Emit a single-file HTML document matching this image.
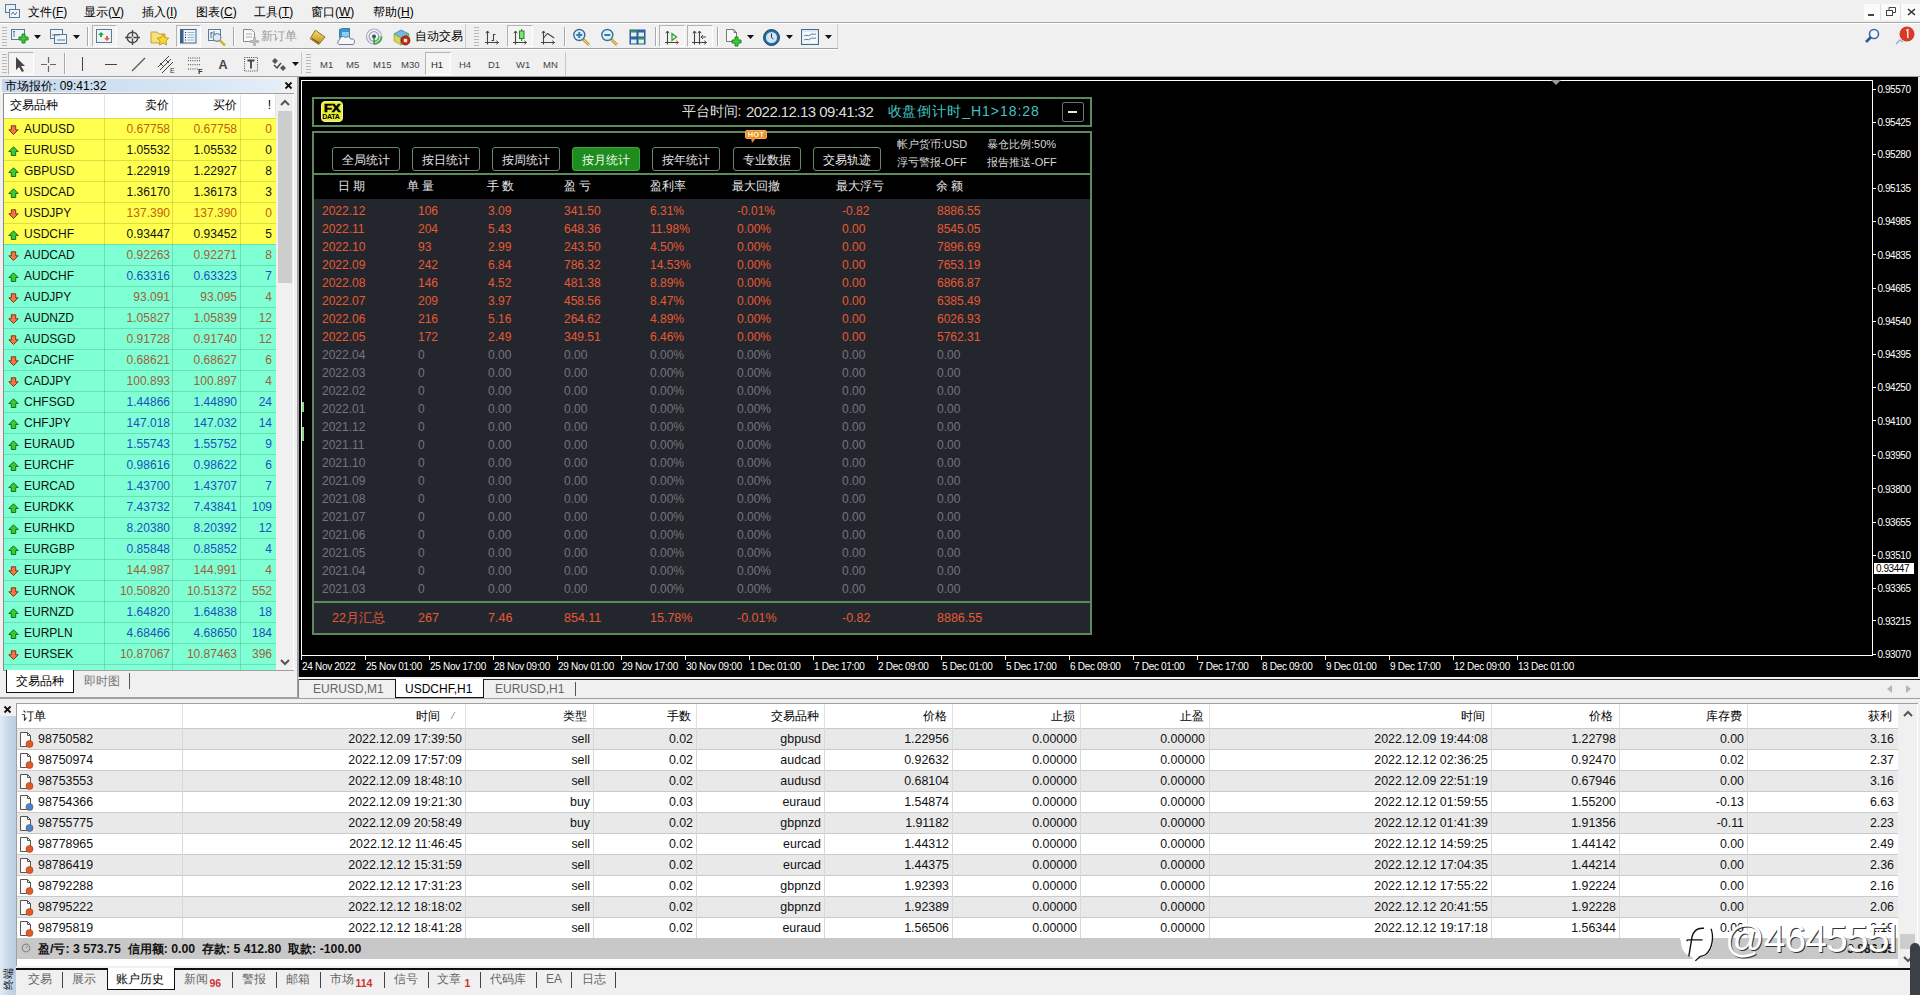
<!DOCTYPE html><html><head><meta charset="utf-8"><style>
*{margin:0;padding:0;box-sizing:border-box}
html,body{width:1920px;height:995px;overflow:hidden}
body{position:relative;background:#f0f0f0;font-family:"Liberation Sans",sans-serif}
.t{position:absolute;white-space:pre}
.b{position:absolute}
</style></head><body>
<div class="b" style="left:0px;top:0px;width:1920px;height:22px;background:#f0f0f0"></div>
<svg class="b" style="left:4px;top:3px" width="17" height="16" viewBox="0 0 17 16"><rect x="1.5" y="1.5" width="10" height="8" fill="#e8f0f8" stroke="#5a7a98"/><rect x="5.5" y="6.5" width="10" height="8" fill="#f0f6fb" stroke="#5a7a98"/><path d="M7 12l2-3 2 3 2-3" stroke="#5a7a98" fill="none"/></svg>
<div class="t" style="left:28px;top:2.5px;height:18px;line-height:18px;font-size:12px;color:#000;">文件(<u>F</u>)</div>
<div class="t" style="left:84px;top:2.5px;height:18px;line-height:18px;font-size:12px;color:#000;">显示(<u>V</u>)</div>
<div class="t" style="left:142px;top:2.5px;height:18px;line-height:18px;font-size:12px;color:#000;">插入(<u>I</u>)</div>
<div class="t" style="left:196px;top:2.5px;height:18px;line-height:18px;font-size:12px;color:#000;">图表(<u>C</u>)</div>
<div class="t" style="left:254px;top:2.5px;height:18px;line-height:18px;font-size:12px;color:#000;">工具(<u>T</u>)</div>
<div class="t" style="left:311px;top:2.5px;height:18px;line-height:18px;font-size:12px;color:#000;">窗口(<u>W</u>)</div>
<div class="t" style="left:373px;top:2.5px;height:18px;line-height:18px;font-size:12px;color:#000;">帮助(<u>H</u>)</div>
<div class="b" style="left:0px;top:22px;width:1920px;height:1px;background:#a8a8a8"></div>
<div class="b" style="left:0px;top:23px;width:1920px;height:1px;background:#ffffff"></div>
<div class="b" style="left:1864px;top:4px;width:56px;height:16px;background:#fbfbfb"></div>
<div class="b" style="left:1880px;top:4px;width:1px;height:16px;background:#e0e0e0"></div>
<div class="b" style="left:1900px;top:4px;width:1px;height:16px;background:#e0e0e0"></div>
<div class="b" style="left:1868px;top:14px;width:6px;height:2px;background:#444"></div>
<svg class="b" style="left:1886px;top:7px" width="10" height="10" viewBox="0 0 10 10"><rect x="0.5" y="3.5" width="6" height="5" fill="none" stroke="#444"/><path d="M3 3.5V0.5h6.5v5H7" fill="none" stroke="#444"/></svg>
<svg class="b" style="left:1907px;top:8px" width="9" height="8" viewBox="0 0 9 8"><path d="M1 1l7 6M8 1L1 7" stroke="#333" stroke-width="1.6"/></svg>
<div class="b" style="left:0px;top:48px;width:838px;height:1px;background:#a0a0a0"></div>
<div class="b" style="left:0px;top:49px;width:838px;height:1px;background:#ffffff"></div>
<div class="b" style="left:0px;top:76px;width:1920px;height:1px;background:#a0a0a0"></div>
<div class="b" style="left:2px;top:27px;width:5px;height:1px;background:#b8b8b8"></div><div class="b" style="left:2px;top:30px;width:5px;height:1px;background:#b8b8b8"></div><div class="b" style="left:2px;top:33px;width:5px;height:1px;background:#b8b8b8"></div><div class="b" style="left:2px;top:36px;width:5px;height:1px;background:#b8b8b8"></div><div class="b" style="left:2px;top:39px;width:5px;height:1px;background:#b8b8b8"></div><div class="b" style="left:2px;top:42px;width:5px;height:1px;background:#b8b8b8"></div><div class="b" style="left:2px;top:45px;width:5px;height:1px;background:#b8b8b8"></div>
<svg class="b" style="left:10px;top:28px" width="20" height="18" viewBox="0 0 20 18"><rect x="1.5" y="1.5" width="13" height="10" fill="#eef4fa" stroke="#5b7b94"/><path d="M3 4l1-1 1 1M4 3v6" stroke="#5b7b94" fill="none"/><path d="M12 6h3v3h3v3h-3v3h-3v-3H9V9h3z" fill="#3cc83c" stroke="#1a8a1a"/></svg>
<svg class="b" style="left:34px;top:35px" width="7" height="4" viewBox="0 0 7 4"><path d="M0 0h7L3.5 4z" fill="#111"/></svg>
<svg class="b" style="left:49px;top:28px" width="20" height="18" viewBox="0 0 20 18"><rect x="1.5" y="1.5" width="12" height="9" fill="#eef4fa" stroke="#5b7b94"/><rect x="5.5" y="6.5" width="12" height="9" fill="#eef4fa" stroke="#5b7b94"/><path d="M3 7h8M8 12h8" stroke="#5b7b94"/></svg>
<svg class="b" style="left:73px;top:35px" width="7" height="4" viewBox="0 0 7 4"><path d="M0 0h7L3.5 4z" fill="#111"/></svg>
<div class="b" style="left:87px;top:27px;width:1px;height:19px;background:#a8a8a8"></div><div class="b" style="left:88px;top:27px;width:1px;height:19px;background:#fff"></div>
<div class="b" style="left:92px;top:25px;width:25px;height:22px;border:1px solid #b4b4b4;border-right-color:#fff;border-bottom-color:#fff;background:#f4f4f4"></div>
<svg class="b" style="left:96px;top:29px" width="17" height="15" viewBox="0 0 17 15"><rect x="0.5" y="0.5" width="15" height="13" fill="#eef4fa" stroke="#5b7b94"/><path d="M5 3l3 3H6v2H4V6H2z" fill="#2aa82a"/><path d="M11 12l3-3h-2V7h-2v2H8z" fill="#e8603c"/></svg>
<svg class="b" style="left:124px;top:29px" width="18" height="17" viewBox="0 0 18 17"><circle cx="8.5" cy="8.5" r="5.3" fill="none" stroke="#4a4a4a" stroke-width="1.4"/><path d="M8.5 1v15M1 8.5h15" stroke="#4a4a4a" stroke-width="1.4"/><circle cx="8.5" cy="8.5" r="1" fill="#f0f0f0"/></svg>
<svg class="b" style="left:150px;top:28px" width="20" height="18" viewBox="0 0 20 18"><path d="M1 4h6l2 2h6v9H1z" fill="#f6e27a" stroke="#c8a030"/><path d="M13 6l1.8 3.6 4 .6-2.9 2.8.7 4-3.6-1.9-3.6 1.9.7-4-2.9-2.8 4-.6z" fill="#f8d838" stroke="#c89820"/></svg>
<div class="b" style="left:176px;top:25px;width:25px;height:22px;border:1px solid #b4b4b4;border-right-color:#fff;border-bottom-color:#fff;background:#f4f4f4"></div>
<svg class="b" style="left:180px;top:29px" width="17" height="15" viewBox="0 0 17 15"><rect x="0.5" y="0.5" width="15.5" height="13.5" fill="#eef6fc" stroke="#3e6688"/><rect x="1" y="1" width="2.5" height="13" fill="#3a6090"/><path d="M5 3.5h1M5 6h1M5 8.5h1M5 11h1" stroke="#223"/><path d="M7.5 3.5h7M7.5 6h7M7.5 8.5h7M7.5 11h7" stroke="#9ab4cc"/></svg>
<svg class="b" style="left:207px;top:28px" width="20" height="19" viewBox="0 0 20 19"><rect x="1.5" y="1.5" width="12" height="11" fill="#eef4fa" stroke="#5b7b94"/><path d="M4 4v6M4 5h2M7 3v5M7 7h2" stroke="#4a6a8a"/><circle cx="10" cy="9.5" r="4" fill="#d8e8f8" fill-opacity="0.8" stroke="#5b7b94"/><path d="M13 12.5l5 5" stroke="#d8b040" stroke-width="2.5"/></svg>
<div class="b" style="left:233px;top:27px;width:1px;height:19px;background:#a8a8a8"></div><div class="b" style="left:234px;top:27px;width:1px;height:19px;background:#fff"></div>
<svg class="b" style="left:242px;top:28px" width="18" height="18" viewBox="0 0 18 18"><path d="M1.5 1.5h8l3 3v9h-11z" fill="#f8f8f8" stroke="#8a8a8a"/><path d="M4 6h6M4 9h6" stroke="#aaa"/><path d="M11 9h3v3h3v3h-3v3h-3v-3H8v-3h3z" fill="#b8b8b8"/></svg>
<div class="t" style="left:261px;top:27.0px;height:18px;line-height:18px;font-size:12px;color:#9a9a9a;">新订单</div>
<svg class="b" style="left:308px;top:28px" width="20" height="19" viewBox="0 0 20 19"><defs><linearGradient id="gy" x1="0" y1="0" x2="0" y2="1"><stop offset="0" stop-color="#f8e070"/><stop offset="1" stop-color="#b88a20"/></linearGradient></defs><path d="M7.3 2.2L17 9l-6.2 7.5L2.2 10.8z" fill="url(#gy)" stroke="#8a6a18" stroke-width="0.9"/><path d="M4 10.5l7 4.5" stroke="#7a5a10" stroke-width="1.2"/></svg>
<svg class="b" style="left:337px;top:28px" width="18" height="18" viewBox="0 0 18 18"><path d="M2.5 1.5l3-1h7v9h-10z" fill="#3a98c8" stroke="#2a6a98" stroke-width="0.8"/><path d="M5 4h7v5H5z" fill="#8ad0f0"/><path d="M2 16.5a2.5 2.5 0 0 1 0.5-4.5 3.5 3.5 0 0 1 6-2.5 3 3 0 0 1 5 1.5 2.8 2.8 0 0 1 2.5 5.5z" fill="#f4f6fa" stroke="#5a6a8a" stroke-width="0.9"/></svg>
<svg class="b" style="left:365px;top:28px" width="18" height="18" viewBox="0 0 18 18"><circle cx="9" cy="8.5" r="7.5" fill="none" stroke="#a8acc8" stroke-width="1.2"/><circle cx="9" cy="8.5" r="4.8" fill="none" stroke="#98a0c0" stroke-width="1.2"/><path d="M16.5 8.5A7.5 7.5 0 0 1 9 16" fill="none" stroke="#50a850" stroke-width="2"/><path d="M13.8 8.5A4.8 4.8 0 0 1 9 13.3" fill="none" stroke="#60b860" stroke-width="1.6"/><circle cx="9" cy="8.5" r="2" fill="#2a5a5a"/><path d="M9 9v7" stroke="#3a8a4a" stroke-width="1.4"/></svg>
<svg class="b" style="left:392px;top:28px" width="20" height="19" viewBox="0 0 20 19"><path d="M2 6l7-4 8 4-8 4z" fill="#78b8e0" stroke="#3a78a8" stroke-width="0.8"/><path d="M2 6l7 4v7l-7-4z" fill="#d8d858" stroke="#8a9030" stroke-width="0.6"/><path d="M9 10l8-4v7l-8 4z" fill="#a8c848" stroke="#7a9030" stroke-width="0.6"/><circle cx="13.5" cy="12.5" r="4.5" fill="#c02818" stroke="#801810" stroke-width="0.8"/><rect x="11.8" y="10.8" width="3.4" height="3.4" fill="#f4e8e0"/></svg>
<div class="t" style="left:415px;top:27.0px;height:18px;line-height:18px;font-size:12px;color:#000;">自动交易</div>
<div class="b" style="left:474px;top:27px;width:5px;height:1px;background:#b8b8b8"></div><div class="b" style="left:474px;top:30px;width:5px;height:1px;background:#b8b8b8"></div><div class="b" style="left:474px;top:33px;width:5px;height:1px;background:#b8b8b8"></div><div class="b" style="left:474px;top:36px;width:5px;height:1px;background:#b8b8b8"></div><div class="b" style="left:474px;top:39px;width:5px;height:1px;background:#b8b8b8"></div><div class="b" style="left:474px;top:42px;width:5px;height:1px;background:#b8b8b8"></div><div class="b" style="left:474px;top:45px;width:5px;height:1px;background:#b8b8b8"></div>
<svg class="b" style="left:482px;top:28px" width="18" height="18" viewBox="0 0 18 18"><path d="M5.5 3v13.5M3 14.5h13.5" stroke="#444" stroke-width="1.1"/><path d="M3.8 5.2L5.5 3l1.7 2.2M14.3 12.8l2.2 1.7-2.2 1.7" fill="none" stroke="#444" stroke-width="1"/><path d="M11.5 6v7M11.5 6.5h2M9.5 12.5h2" stroke="#444" stroke-width="1.1"/></svg>
<div class="b" style="left:507px;top:25px;width:26px;height:22px;border:1px solid #b4b4b4;border-right-color:#fff;border-bottom-color:#fff;background:#f4f4f4"></div>
<svg class="b" style="left:511px;top:28px" width="18" height="18" viewBox="0 0 18 18"><path d="M4.5 3v13.5M2 14.5h13.5" stroke="#444" stroke-width="1.1"/><path d="M2.8 5.2L4.5 3l1.7 2.2M13.3 12.8l2.2 1.7-2.2 1.7" fill="none" stroke="#444" stroke-width="1"/><path d="M10.6 1v12" stroke="#226622"/><rect x="8.5" y="3" width="4.5" height="7.5" fill="#7ae07a" stroke="#228822"/></svg>
<svg class="b" style="left:540px;top:28px" width="18" height="18" viewBox="0 0 18 18"><path d="M3.5 3v13.5M1 14.5h13.5" stroke="#444" stroke-width="1.1"/><path d="M1.8 5.2L3.5 3l1.7 2.2M12.3 12.8l2.2 1.7-2.2 1.7" fill="none" stroke="#444" stroke-width="1"/><path d="M3.5 10l4-4.5 6.7 4.5" fill="none" stroke="#444" stroke-width="1.1"/></svg>
<div class="b" style="left:564px;top:27px;width:1px;height:19px;background:#a8a8a8"></div><div class="b" style="left:565px;top:27px;width:1px;height:19px;background:#fff"></div>
<svg class="b" style="left:572px;top:28px" width="20" height="19" viewBox="0 0 20 19"><path d="M11.5 11.5l5.5 5.5" stroke="#c8a030" stroke-width="3"/><path d="M11.5 11.5l5.5 5.5" stroke="#f0d890" stroke-width="1"/><circle cx="7.3" cy="7" r="5.5" fill="#dcf0fa" stroke="#3a6e94" stroke-width="1.4"/><path d="M4.3 7h6M7.3 4v6" stroke="#3a7aa8" stroke-width="2"/></svg>
<svg class="b" style="left:600px;top:28px" width="20" height="19" viewBox="0 0 20 19"><path d="M11.5 11.5l5.5 5.5" stroke="#c8a030" stroke-width="3"/><path d="M11.5 11.5l5.5 5.5" stroke="#f0d890" stroke-width="1"/><circle cx="7.3" cy="7" r="5.5" fill="#dcf0fa" stroke="#3a6e94" stroke-width="1.4"/><path d="M4.3 7h6" stroke="#3a7aa8" stroke-width="2"/></svg>
<svg class="b" style="left:629px;top:29px" width="17" height="16" viewBox="0 0 17 16"><rect x="0.5" y="0.5" width="16" height="15" fill="#2a5a98"/><rect x="1.5" y="1.5" width="6.5" height="2" fill="#3a9a48"/><rect x="9" y="1.5" width="6.5" height="2" fill="#2a68b0"/><rect x="1.5" y="8.5" width="6.5" height="2" fill="#2a68b0"/><rect x="9" y="8.5" width="6.5" height="2" fill="#3a9a48"/><rect x="2" y="3.5" width="5.5" height="4" fill="#e4f2e4"/><rect x="9.5" y="3.5" width="5.5" height="4" fill="#e4eef8"/><rect x="2" y="10.5" width="5.5" height="4" fill="#e4eef8"/><rect x="9.5" y="10.5" width="5.5" height="4" fill="#e4f2e4"/></svg>
<div class="b" style="left:655px;top:27px;width:1px;height:19px;background:#a8a8a8"></div><div class="b" style="left:656px;top:27px;width:1px;height:19px;background:#fff"></div>
<div class="b" style="left:659px;top:25px;width:26px;height:22px;border:1px solid #b4b4b4;border-right-color:#fff;border-bottom-color:#fff;background:#f4f4f4"></div>
<svg class="b" style="left:663px;top:28px" width="18" height="18" viewBox="0 0 18 18"><path d="M4.5 3v13.5M2 14.5h13.5" stroke="#444" stroke-width="1.1"/><path d="M2.8 5.2L4.5 3l1.7 2.2" fill="none" stroke="#444" stroke-width="1"/><path d="M13.3 12.8l2.2 1.7-2.2 1.7" fill="none" stroke="#c04040" stroke-width="1"/><path d="M9 5.5v7l4.5-3.5z" fill="none" stroke="#30a030" stroke-width="1.3"/></svg>
<div class="b" style="left:687px;top:25px;width:26px;height:22px;border:1px solid #b4b4b4;border-right-color:#fff;border-bottom-color:#fff;background:#f4f4f4"></div>
<svg class="b" style="left:691px;top:28px" width="18" height="18" viewBox="0 0 18 18"><path d="M3.5 3v13.5M8.5 3v13.5M1 14.5h14.5" stroke="#444" stroke-width="1.1"/><path d="M1.8 5.2L3.5 3l1.7 2.2M6.8 5.2L8.5 3l1.7 2.2M13.3 12.8l2.2 1.7-2.2 1.7" fill="none" stroke="#444" stroke-width="1"/><path d="M15 9h-5M12 7l-2 2 2 2" fill="none" stroke="#444"/></svg>
<div class="b" style="left:717px;top:27px;width:1px;height:19px;background:#a8a8a8"></div><div class="b" style="left:718px;top:27px;width:1px;height:19px;background:#fff"></div>
<svg class="b" style="left:725px;top:28px" width="19" height="19" viewBox="0 0 19 19"><path d="M1.5 1.5h7l3 3v9h-10z" fill="#f8f8f8" stroke="#777"/><path d="M9 1.5v3h3" fill="none" stroke="#777"/><path d="M10 9h3v3h3v3h-3v3h-3v-3H7v-3h3z" fill="#3cc83c" stroke="#1a8a1a"/></svg>
<svg class="b" style="left:747px;top:35px" width="7" height="4" viewBox="0 0 7 4"><path d="M0 0h7L3.5 4z" fill="#111"/></svg>
<svg class="b" style="left:762px;top:28px" width="19" height="19" viewBox="0 0 19 19"><circle cx="9.5" cy="9.5" r="8" fill="#2a6a98" stroke="#1a4a70"/><circle cx="9.5" cy="9.5" r="5.5" fill="#cfe6f6"/><path d="M9.5 5.5v4l2 1.5" fill="none" stroke="#333"/></svg>
<svg class="b" style="left:786px;top:35px" width="7" height="4" viewBox="0 0 7 4"><path d="M0 0h7L3.5 4z" fill="#111"/></svg>
<svg class="b" style="left:801px;top:29px" width="19" height="17" viewBox="0 0 19 17"><rect x="0.5" y="0.5" width="17" height="15" fill="#dce8f4" stroke="#4a6a8a"/><rect x="2" y="3" width="14" height="11" fill="#f4f8fc"/><path d="M3 7c2-2 4 1 6-1s4 0 6-1M3 11c2-2 4 1 6-1s4 0 6-1" fill="none" stroke="#5a7a9a"/></svg>
<svg class="b" style="left:825px;top:35px" width="7" height="4" viewBox="0 0 7 4"><path d="M0 0h7L3.5 4z" fill="#111"/></svg>
<div class="b" style="left:837px;top:24px;width:1px;height:24px;background:#d0d0d0"></div>
<div class="b" style="left:465px;top:24px;width:1px;height:24px;background:#d0d0d0"></div>
<svg class="b" style="left:1864px;top:28px" width="16" height="16" viewBox="0 0 16 16"><circle cx="10" cy="6" r="4.5" fill="#f4f8fc" stroke="#3a6aa8" stroke-width="1.6"/><path d="M7 9l-5 5" stroke="#2a5a98" stroke-width="2.6"/></svg>
<svg class="b" style="left:1892px;top:26px" width="26" height="22" viewBox="0 0 26 22"><path d="M4 18l4-4 3 2" fill="none" stroke="#9ab0c8" stroke-width="1.5"/><circle cx="15" cy="8" r="7.5" fill="#d83a2a"/><path d="M14 4.5l1.8-1V12" fill="none" stroke="#fff" stroke-width="1.3"/></svg>
<div class="b" style="left:2px;top:54px;width:5px;height:1px;background:#b8b8b8"></div><div class="b" style="left:2px;top:57px;width:5px;height:1px;background:#b8b8b8"></div><div class="b" style="left:2px;top:60px;width:5px;height:1px;background:#b8b8b8"></div><div class="b" style="left:2px;top:63px;width:5px;height:1px;background:#b8b8b8"></div><div class="b" style="left:2px;top:66px;width:5px;height:1px;background:#b8b8b8"></div><div class="b" style="left:2px;top:69px;width:5px;height:1px;background:#b8b8b8"></div><div class="b" style="left:2px;top:72px;width:5px;height:1px;background:#b8b8b8"></div>
<div class="b" style="left:8px;top:52px;width:26px;height:23px;border:1px solid #b4b4b4;border-right-color:#fff;border-bottom-color:#fff;background:#f4f4f4"></div>
<svg class="b" style="left:15px;top:56px" width="12" height="16" viewBox="0 0 12 16"><path d="M1 1v13l3-3 3 5 2-1-3-5h4z" fill="#444"/></svg>
<svg class="b" style="left:40px;top:56px" width="17" height="17" viewBox="0 0 17 17"><path d="M8.5 1v6M8.5 10v6M1 8.5h6M10 8.5h6" stroke="#666" stroke-width="1.2"/></svg>
<div class="b" style="left:64px;top:53px;width:1px;height:21px;background:#a8a8a8"></div><div class="b" style="left:65px;top:53px;width:1px;height:21px;background:#fff"></div>
<div class="b" style="left:82px;top:57px;width:1px;height:14px;background:#444"></div>
<div class="b" style="left:105px;top:64px;width:12px;height:1px;background:#444"></div>
<svg class="b" style="left:131px;top:57px" width="15" height="15" viewBox="0 0 15 15"><path d="M1 14L14 1" stroke="#555" stroke-width="1.2"/></svg>
<svg class="b" style="left:157px;top:55px" width="20" height="19" viewBox="0 0 20 19"><path d="M1 12L12 1M3 15L14 4M5 18l11-11" stroke="#444"/><path d="M3 8l4 4M8 4l4 4" stroke="#444"/><text x="13" y="18" font-size="7" font-family="Liberation Sans" fill="#333">E</text></svg>
<svg class="b" style="left:186px;top:55px" width="20" height="19" viewBox="0 0 20 19"><path d="M2 3h13M2 5.7h13M2 9.7h13M2 14h11" stroke="#444" stroke-dasharray="1 1.2"/><text x="12" y="18.5" font-size="7.5" font-weight="bold" font-family="Liberation Sans" fill="#333">F</text></svg>
<div class="t" style="left:218.5px;top:55.5px;height:18px;line-height:18px;font-size:12.5px;color:#444;font-weight:bold">A</div>
<svg class="b" style="left:244px;top:57px" width="14" height="15" viewBox="0 0 14 15"><rect x="0.5" y="0.5" width="13" height="13.5" fill="none" stroke="#444" stroke-dasharray="1 1.2"/><path d="M3.5 3.5h7M7 3.5v8" stroke="#444" stroke-width="1.8"/></svg>
<svg class="b" style="left:271px;top:57px" width="16" height="15" viewBox="0 0 16 15"><path d="M4 1l3 3-3 3-3-3z" fill="#555"/><path d="M3 8l3 3 4-5" stroke="#444" stroke-width="1.4" fill="none"/><path d="M12 8l3 3-3 3-3-3z" fill="#555"/></svg>
<svg class="b" style="left:292px;top:62px" width="7" height="4" viewBox="0 0 7 4"><path d="M0 0h7L3.5 4z" fill="#111"/></svg>
<div class="b" style="left:301px;top:52px;width:1px;height:22px;background:#c8c8c8"></div>
<div class="b" style="left:306px;top:54px;width:5px;height:1px;background:#b8b8b8"></div><div class="b" style="left:306px;top:57px;width:5px;height:1px;background:#b8b8b8"></div><div class="b" style="left:306px;top:60px;width:5px;height:1px;background:#b8b8b8"></div><div class="b" style="left:306px;top:63px;width:5px;height:1px;background:#b8b8b8"></div><div class="b" style="left:306px;top:66px;width:5px;height:1px;background:#b8b8b8"></div><div class="b" style="left:306px;top:69px;width:5px;height:1px;background:#b8b8b8"></div><div class="b" style="left:306px;top:72px;width:5px;height:1px;background:#b8b8b8"></div>
<div class="t" style="left:320px;top:57.5px;height:14px;line-height:14px;font-size:9.5px;color:#444;">M1</div>
<div class="t" style="left:346px;top:57.5px;height:14px;line-height:14px;font-size:9.5px;color:#444;">M5</div>
<div class="t" style="left:373px;top:57.5px;height:14px;line-height:14px;font-size:9.5px;color:#444;">M15</div>
<div class="t" style="left:401px;top:57.5px;height:14px;line-height:14px;font-size:9.5px;color:#444;">M30</div>
<div class="t" style="left:459px;top:57.5px;height:14px;line-height:14px;font-size:9.5px;color:#444;">H4</div>
<div class="t" style="left:488px;top:57.5px;height:14px;line-height:14px;font-size:9.5px;color:#444;">D1</div>
<div class="t" style="left:516px;top:57.5px;height:14px;line-height:14px;font-size:9.5px;color:#444;">W1</div>
<div class="t" style="left:543px;top:57.5px;height:14px;line-height:14px;font-size:9.5px;color:#444;">MN</div>
<div class="b" style="left:425px;top:52px;width:26px;height:23px;border:1px solid #b4b4b4;border-right-color:#fff;border-bottom-color:#fff;background:#f4f4f4"></div>
<div class="t" style="left:431px;top:57.5px;height:14px;line-height:14px;font-size:9.5px;color:#222;">H1</div>
<div class="b" style="left:565px;top:52px;width:1px;height:24px;background:#c8c8c8"></div>
<div class="b" style="left:0px;top:77px;width:298px;height:621px;background:#f0f0f0"></div>
<div class="b" style="left:297px;top:77px;width:1px;height:621px;background:#a0a0a0"></div>
<div class="b" style="left:2px;top:79px;width:279px;height:13px;background:linear-gradient(to right,#c4d8ec,#d8e6f4 70%,#e4eef8)"></div>
<div class="t" style="left:5px;top:76.5px;height:18px;line-height:18px;font-size:12px;color:#000;">市场报价: 09:41:32</div>
<svg class="b" style="left:284px;top:81px" width="9" height="9" viewBox="0 0 9 9"><path d="M1.5 1.5l6 6M7.5 1.5l-6 6" stroke="#111" stroke-width="1.8"/></svg>
<div class="b" style="left:3px;top:93px;width:291px;height:578px;background:#fff;border-top:1px solid #a0a0a0;border-left:1px solid #8a8a8a"></div>
<div class="t" style="left:10px;top:96.0px;height:18px;line-height:18px;font-size:12px;color:#000;">交易品种</div>
<div class="t" style="left:-231px;width:400px;text-align:right;top:96.0px;height:18px;line-height:18px;font-size:12px;color:#000;">卖价</div>
<div class="t" style="left:-163px;width:400px;text-align:right;top:96.0px;height:18px;line-height:18px;font-size:12px;color:#000;">买价</div>
<div class="t" style="left:-129px;width:400px;text-align:right;top:96.0px;height:18px;line-height:18px;font-size:12px;color:#000;">!</div>
<div class="b" style="left:104px;top:95px;width:1px;height:22px;background:#e4e4e4"></div>
<div class="b" style="left:172px;top:95px;width:1px;height:22px;background:#e4e4e4"></div>
<div class="b" style="left:240px;top:95px;width:1px;height:22px;background:#e4e4e4"></div>
<div class="b" style="left:275px;top:95px;width:1px;height:22px;background:#e4e4e4"></div>
<div class="b" style="left:0;top:0;width:298px;height:671px;overflow:hidden"><div class="b" style="left:4px;top:118px;width:272px;height:21px;background:#ffff50"></div><div class="b" style="left:4px;top:118px;width:272px;height:1px;background:rgba(0,0,0,0.13)"></div><div class="b" style="left:104px;top:118px;width:1px;height:21px;background:rgba(0,0,0,0.13)"></div><div class="b" style="left:172px;top:118px;width:1px;height:21px;background:rgba(0,0,0,0.13)"></div><div class="b" style="left:240px;top:118px;width:1px;height:21px;background:rgba(0,0,0,0.13)"></div><svg class="b" style="left:8px;top:125px" width="11" height="11" viewBox="0 0 11 11"><path d="M5.5 9.5L0.8 4.8H3.3V0.8H7.7V4.8H10.2Z" fill="#f07848" stroke="#8a3010" stroke-width="1"/></svg><div class="t" style="left:24px;top:120.0px;height:18px;line-height:18px;font-size:12px;color:#111;">AUDUSD</div><div class="t" style="left:-230px;width:400px;text-align:right;top:120.0px;height:18px;line-height:18px;font-size:12px;color:#c0620a;">0.67758</div><div class="t" style="left:-163px;width:400px;text-align:right;top:120.0px;height:18px;line-height:18px;font-size:12px;color:#c0620a;">0.67758</div><div class="t" style="left:-128px;width:400px;text-align:right;top:120.0px;height:18px;line-height:18px;font-size:12px;color:#c0620a;">0</div><div class="b" style="left:4px;top:139px;width:272px;height:21px;background:#ffff50"></div><div class="b" style="left:4px;top:139px;width:272px;height:1px;background:rgba(0,0,0,0.13)"></div><div class="b" style="left:104px;top:139px;width:1px;height:21px;background:rgba(0,0,0,0.13)"></div><div class="b" style="left:172px;top:139px;width:1px;height:21px;background:rgba(0,0,0,0.13)"></div><div class="b" style="left:240px;top:139px;width:1px;height:21px;background:rgba(0,0,0,0.13)"></div><svg class="b" style="left:8px;top:146px" width="11" height="11" viewBox="0 0 11 11"><path d="M5.5 0.8L0.8 5.5H3.3V9.5H7.7V5.5H10.2Z" fill="#3cc83c" stroke="#157015" stroke-width="1"/></svg><div class="t" style="left:24px;top:141.0px;height:18px;line-height:18px;font-size:12px;color:#111;">EURUSD</div><div class="t" style="left:-230px;width:400px;text-align:right;top:141.0px;height:18px;line-height:18px;font-size:12px;color:#111;">1.05532</div><div class="t" style="left:-163px;width:400px;text-align:right;top:141.0px;height:18px;line-height:18px;font-size:12px;color:#111;">1.05532</div><div class="t" style="left:-128px;width:400px;text-align:right;top:141.0px;height:18px;line-height:18px;font-size:12px;color:#111;">0</div><div class="b" style="left:4px;top:160px;width:272px;height:21px;background:#ffff50"></div><div class="b" style="left:4px;top:160px;width:272px;height:1px;background:rgba(0,0,0,0.13)"></div><div class="b" style="left:104px;top:160px;width:1px;height:21px;background:rgba(0,0,0,0.13)"></div><div class="b" style="left:172px;top:160px;width:1px;height:21px;background:rgba(0,0,0,0.13)"></div><div class="b" style="left:240px;top:160px;width:1px;height:21px;background:rgba(0,0,0,0.13)"></div><svg class="b" style="left:8px;top:167px" width="11" height="11" viewBox="0 0 11 11"><path d="M5.5 0.8L0.8 5.5H3.3V9.5H7.7V5.5H10.2Z" fill="#3cc83c" stroke="#157015" stroke-width="1"/></svg><div class="t" style="left:24px;top:162.0px;height:18px;line-height:18px;font-size:12px;color:#111;">GBPUSD</div><div class="t" style="left:-230px;width:400px;text-align:right;top:162.0px;height:18px;line-height:18px;font-size:12px;color:#111;">1.22919</div><div class="t" style="left:-163px;width:400px;text-align:right;top:162.0px;height:18px;line-height:18px;font-size:12px;color:#111;">1.22927</div><div class="t" style="left:-128px;width:400px;text-align:right;top:162.0px;height:18px;line-height:18px;font-size:12px;color:#111;">8</div><div class="b" style="left:4px;top:181px;width:272px;height:21px;background:#ffff50"></div><div class="b" style="left:4px;top:181px;width:272px;height:1px;background:rgba(0,0,0,0.13)"></div><div class="b" style="left:104px;top:181px;width:1px;height:21px;background:rgba(0,0,0,0.13)"></div><div class="b" style="left:172px;top:181px;width:1px;height:21px;background:rgba(0,0,0,0.13)"></div><div class="b" style="left:240px;top:181px;width:1px;height:21px;background:rgba(0,0,0,0.13)"></div><svg class="b" style="left:8px;top:188px" width="11" height="11" viewBox="0 0 11 11"><path d="M5.5 0.8L0.8 5.5H3.3V9.5H7.7V5.5H10.2Z" fill="#3cc83c" stroke="#157015" stroke-width="1"/></svg><div class="t" style="left:24px;top:183.0px;height:18px;line-height:18px;font-size:12px;color:#111;">USDCAD</div><div class="t" style="left:-230px;width:400px;text-align:right;top:183.0px;height:18px;line-height:18px;font-size:12px;color:#111;">1.36170</div><div class="t" style="left:-163px;width:400px;text-align:right;top:183.0px;height:18px;line-height:18px;font-size:12px;color:#111;">1.36173</div><div class="t" style="left:-128px;width:400px;text-align:right;top:183.0px;height:18px;line-height:18px;font-size:12px;color:#111;">3</div><div class="b" style="left:4px;top:202px;width:272px;height:21px;background:#ffff50"></div><div class="b" style="left:4px;top:202px;width:272px;height:1px;background:rgba(0,0,0,0.13)"></div><div class="b" style="left:104px;top:202px;width:1px;height:21px;background:rgba(0,0,0,0.13)"></div><div class="b" style="left:172px;top:202px;width:1px;height:21px;background:rgba(0,0,0,0.13)"></div><div class="b" style="left:240px;top:202px;width:1px;height:21px;background:rgba(0,0,0,0.13)"></div><svg class="b" style="left:8px;top:209px" width="11" height="11" viewBox="0 0 11 11"><path d="M5.5 9.5L0.8 4.8H3.3V0.8H7.7V4.8H10.2Z" fill="#f07848" stroke="#8a3010" stroke-width="1"/></svg><div class="t" style="left:24px;top:204.0px;height:18px;line-height:18px;font-size:12px;color:#111;">USDJPY</div><div class="t" style="left:-230px;width:400px;text-align:right;top:204.0px;height:18px;line-height:18px;font-size:12px;color:#c0620a;">137.390</div><div class="t" style="left:-163px;width:400px;text-align:right;top:204.0px;height:18px;line-height:18px;font-size:12px;color:#c0620a;">137.390</div><div class="t" style="left:-128px;width:400px;text-align:right;top:204.0px;height:18px;line-height:18px;font-size:12px;color:#c0620a;">0</div><div class="b" style="left:4px;top:223px;width:272px;height:21px;background:#ffff50"></div><div class="b" style="left:4px;top:223px;width:272px;height:1px;background:rgba(0,0,0,0.13)"></div><div class="b" style="left:104px;top:223px;width:1px;height:21px;background:rgba(0,0,0,0.13)"></div><div class="b" style="left:172px;top:223px;width:1px;height:21px;background:rgba(0,0,0,0.13)"></div><div class="b" style="left:240px;top:223px;width:1px;height:21px;background:rgba(0,0,0,0.13)"></div><svg class="b" style="left:8px;top:230px" width="11" height="11" viewBox="0 0 11 11"><path d="M5.5 0.8L0.8 5.5H3.3V9.5H7.7V5.5H10.2Z" fill="#3cc83c" stroke="#157015" stroke-width="1"/></svg><div class="t" style="left:24px;top:225.0px;height:18px;line-height:18px;font-size:12px;color:#111;">USDCHF</div><div class="t" style="left:-230px;width:400px;text-align:right;top:225.0px;height:18px;line-height:18px;font-size:12px;color:#111;">0.93447</div><div class="t" style="left:-163px;width:400px;text-align:right;top:225.0px;height:18px;line-height:18px;font-size:12px;color:#111;">0.93452</div><div class="t" style="left:-128px;width:400px;text-align:right;top:225.0px;height:18px;line-height:18px;font-size:12px;color:#111;">5</div><div class="b" style="left:4px;top:244px;width:272px;height:21px;background:#7fffd4"></div><div class="b" style="left:4px;top:244px;width:272px;height:1px;background:rgba(0,0,0,0.13)"></div><div class="b" style="left:104px;top:244px;width:1px;height:21px;background:rgba(0,0,0,0.13)"></div><div class="b" style="left:172px;top:244px;width:1px;height:21px;background:rgba(0,0,0,0.13)"></div><div class="b" style="left:240px;top:244px;width:1px;height:21px;background:rgba(0,0,0,0.13)"></div><svg class="b" style="left:8px;top:251px" width="11" height="11" viewBox="0 0 11 11"><path d="M5.5 9.5L0.8 4.8H3.3V0.8H7.7V4.8H10.2Z" fill="#f07848" stroke="#8a3010" stroke-width="1"/></svg><div class="t" style="left:24px;top:246.0px;height:18px;line-height:18px;font-size:12px;color:#111;">AUDCAD</div><div class="t" style="left:-230px;width:400px;text-align:right;top:246.0px;height:18px;line-height:18px;font-size:12px;color:#a0603a;">0.92263</div><div class="t" style="left:-163px;width:400px;text-align:right;top:246.0px;height:18px;line-height:18px;font-size:12px;color:#a0603a;">0.92271</div><div class="t" style="left:-128px;width:400px;text-align:right;top:246.0px;height:18px;line-height:18px;font-size:12px;color:#a0603a;">8</div><div class="b" style="left:4px;top:265px;width:272px;height:21px;background:#7fffd4"></div><div class="b" style="left:4px;top:265px;width:272px;height:1px;background:rgba(0,0,0,0.13)"></div><div class="b" style="left:104px;top:265px;width:1px;height:21px;background:rgba(0,0,0,0.13)"></div><div class="b" style="left:172px;top:265px;width:1px;height:21px;background:rgba(0,0,0,0.13)"></div><div class="b" style="left:240px;top:265px;width:1px;height:21px;background:rgba(0,0,0,0.13)"></div><svg class="b" style="left:8px;top:272px" width="11" height="11" viewBox="0 0 11 11"><path d="M5.5 0.8L0.8 5.5H3.3V9.5H7.7V5.5H10.2Z" fill="#3cc83c" stroke="#157015" stroke-width="1"/></svg><div class="t" style="left:24px;top:267.0px;height:18px;line-height:18px;font-size:12px;color:#111;">AUDCHF</div><div class="t" style="left:-230px;width:400px;text-align:right;top:267.0px;height:18px;line-height:18px;font-size:12px;color:#1c50c0;">0.63316</div><div class="t" style="left:-163px;width:400px;text-align:right;top:267.0px;height:18px;line-height:18px;font-size:12px;color:#1c50c0;">0.63323</div><div class="t" style="left:-128px;width:400px;text-align:right;top:267.0px;height:18px;line-height:18px;font-size:12px;color:#1c50c0;">7</div><div class="b" style="left:4px;top:286px;width:272px;height:21px;background:#7fffd4"></div><div class="b" style="left:4px;top:286px;width:272px;height:1px;background:rgba(0,0,0,0.13)"></div><div class="b" style="left:104px;top:286px;width:1px;height:21px;background:rgba(0,0,0,0.13)"></div><div class="b" style="left:172px;top:286px;width:1px;height:21px;background:rgba(0,0,0,0.13)"></div><div class="b" style="left:240px;top:286px;width:1px;height:21px;background:rgba(0,0,0,0.13)"></div><svg class="b" style="left:8px;top:293px" width="11" height="11" viewBox="0 0 11 11"><path d="M5.5 9.5L0.8 4.8H3.3V0.8H7.7V4.8H10.2Z" fill="#f07848" stroke="#8a3010" stroke-width="1"/></svg><div class="t" style="left:24px;top:288.0px;height:18px;line-height:18px;font-size:12px;color:#111;">AUDJPY</div><div class="t" style="left:-230px;width:400px;text-align:right;top:288.0px;height:18px;line-height:18px;font-size:12px;color:#a0603a;">93.091</div><div class="t" style="left:-163px;width:400px;text-align:right;top:288.0px;height:18px;line-height:18px;font-size:12px;color:#a0603a;">93.095</div><div class="t" style="left:-128px;width:400px;text-align:right;top:288.0px;height:18px;line-height:18px;font-size:12px;color:#a0603a;">4</div><div class="b" style="left:4px;top:307px;width:272px;height:21px;background:#7fffd4"></div><div class="b" style="left:4px;top:307px;width:272px;height:1px;background:rgba(0,0,0,0.13)"></div><div class="b" style="left:104px;top:307px;width:1px;height:21px;background:rgba(0,0,0,0.13)"></div><div class="b" style="left:172px;top:307px;width:1px;height:21px;background:rgba(0,0,0,0.13)"></div><div class="b" style="left:240px;top:307px;width:1px;height:21px;background:rgba(0,0,0,0.13)"></div><svg class="b" style="left:8px;top:314px" width="11" height="11" viewBox="0 0 11 11"><path d="M5.5 9.5L0.8 4.8H3.3V0.8H7.7V4.8H10.2Z" fill="#f07848" stroke="#8a3010" stroke-width="1"/></svg><div class="t" style="left:24px;top:309.0px;height:18px;line-height:18px;font-size:12px;color:#111;">AUDNZD</div><div class="t" style="left:-230px;width:400px;text-align:right;top:309.0px;height:18px;line-height:18px;font-size:12px;color:#a0603a;">1.05827</div><div class="t" style="left:-163px;width:400px;text-align:right;top:309.0px;height:18px;line-height:18px;font-size:12px;color:#a0603a;">1.05839</div><div class="t" style="left:-128px;width:400px;text-align:right;top:309.0px;height:18px;line-height:18px;font-size:12px;color:#a0603a;">12</div><div class="b" style="left:4px;top:328px;width:272px;height:21px;background:#7fffd4"></div><div class="b" style="left:4px;top:328px;width:272px;height:1px;background:rgba(0,0,0,0.13)"></div><div class="b" style="left:104px;top:328px;width:1px;height:21px;background:rgba(0,0,0,0.13)"></div><div class="b" style="left:172px;top:328px;width:1px;height:21px;background:rgba(0,0,0,0.13)"></div><div class="b" style="left:240px;top:328px;width:1px;height:21px;background:rgba(0,0,0,0.13)"></div><svg class="b" style="left:8px;top:335px" width="11" height="11" viewBox="0 0 11 11"><path d="M5.5 9.5L0.8 4.8H3.3V0.8H7.7V4.8H10.2Z" fill="#f07848" stroke="#8a3010" stroke-width="1"/></svg><div class="t" style="left:24px;top:330.0px;height:18px;line-height:18px;font-size:12px;color:#111;">AUDSGD</div><div class="t" style="left:-230px;width:400px;text-align:right;top:330.0px;height:18px;line-height:18px;font-size:12px;color:#a0603a;">0.91728</div><div class="t" style="left:-163px;width:400px;text-align:right;top:330.0px;height:18px;line-height:18px;font-size:12px;color:#a0603a;">0.91740</div><div class="t" style="left:-128px;width:400px;text-align:right;top:330.0px;height:18px;line-height:18px;font-size:12px;color:#a0603a;">12</div><div class="b" style="left:4px;top:349px;width:272px;height:21px;background:#7fffd4"></div><div class="b" style="left:4px;top:349px;width:272px;height:1px;background:rgba(0,0,0,0.13)"></div><div class="b" style="left:104px;top:349px;width:1px;height:21px;background:rgba(0,0,0,0.13)"></div><div class="b" style="left:172px;top:349px;width:1px;height:21px;background:rgba(0,0,0,0.13)"></div><div class="b" style="left:240px;top:349px;width:1px;height:21px;background:rgba(0,0,0,0.13)"></div><svg class="b" style="left:8px;top:356px" width="11" height="11" viewBox="0 0 11 11"><path d="M5.5 9.5L0.8 4.8H3.3V0.8H7.7V4.8H10.2Z" fill="#f07848" stroke="#8a3010" stroke-width="1"/></svg><div class="t" style="left:24px;top:351.0px;height:18px;line-height:18px;font-size:12px;color:#111;">CADCHF</div><div class="t" style="left:-230px;width:400px;text-align:right;top:351.0px;height:18px;line-height:18px;font-size:12px;color:#a0603a;">0.68621</div><div class="t" style="left:-163px;width:400px;text-align:right;top:351.0px;height:18px;line-height:18px;font-size:12px;color:#a0603a;">0.68627</div><div class="t" style="left:-128px;width:400px;text-align:right;top:351.0px;height:18px;line-height:18px;font-size:12px;color:#a0603a;">6</div><div class="b" style="left:4px;top:370px;width:272px;height:21px;background:#7fffd4"></div><div class="b" style="left:4px;top:370px;width:272px;height:1px;background:rgba(0,0,0,0.13)"></div><div class="b" style="left:104px;top:370px;width:1px;height:21px;background:rgba(0,0,0,0.13)"></div><div class="b" style="left:172px;top:370px;width:1px;height:21px;background:rgba(0,0,0,0.13)"></div><div class="b" style="left:240px;top:370px;width:1px;height:21px;background:rgba(0,0,0,0.13)"></div><svg class="b" style="left:8px;top:377px" width="11" height="11" viewBox="0 0 11 11"><path d="M5.5 9.5L0.8 4.8H3.3V0.8H7.7V4.8H10.2Z" fill="#f07848" stroke="#8a3010" stroke-width="1"/></svg><div class="t" style="left:24px;top:372.0px;height:18px;line-height:18px;font-size:12px;color:#111;">CADJPY</div><div class="t" style="left:-230px;width:400px;text-align:right;top:372.0px;height:18px;line-height:18px;font-size:12px;color:#a0603a;">100.893</div><div class="t" style="left:-163px;width:400px;text-align:right;top:372.0px;height:18px;line-height:18px;font-size:12px;color:#a0603a;">100.897</div><div class="t" style="left:-128px;width:400px;text-align:right;top:372.0px;height:18px;line-height:18px;font-size:12px;color:#a0603a;">4</div><div class="b" style="left:4px;top:391px;width:272px;height:21px;background:#7fffd4"></div><div class="b" style="left:4px;top:391px;width:272px;height:1px;background:rgba(0,0,0,0.13)"></div><div class="b" style="left:104px;top:391px;width:1px;height:21px;background:rgba(0,0,0,0.13)"></div><div class="b" style="left:172px;top:391px;width:1px;height:21px;background:rgba(0,0,0,0.13)"></div><div class="b" style="left:240px;top:391px;width:1px;height:21px;background:rgba(0,0,0,0.13)"></div><svg class="b" style="left:8px;top:398px" width="11" height="11" viewBox="0 0 11 11"><path d="M5.5 0.8L0.8 5.5H3.3V9.5H7.7V5.5H10.2Z" fill="#3cc83c" stroke="#157015" stroke-width="1"/></svg><div class="t" style="left:24px;top:393.0px;height:18px;line-height:18px;font-size:12px;color:#111;">CHFSGD</div><div class="t" style="left:-230px;width:400px;text-align:right;top:393.0px;height:18px;line-height:18px;font-size:12px;color:#1c50c0;">1.44866</div><div class="t" style="left:-163px;width:400px;text-align:right;top:393.0px;height:18px;line-height:18px;font-size:12px;color:#1c50c0;">1.44890</div><div class="t" style="left:-128px;width:400px;text-align:right;top:393.0px;height:18px;line-height:18px;font-size:12px;color:#1c50c0;">24</div><div class="b" style="left:4px;top:412px;width:272px;height:21px;background:#7fffd4"></div><div class="b" style="left:4px;top:412px;width:272px;height:1px;background:rgba(0,0,0,0.13)"></div><div class="b" style="left:104px;top:412px;width:1px;height:21px;background:rgba(0,0,0,0.13)"></div><div class="b" style="left:172px;top:412px;width:1px;height:21px;background:rgba(0,0,0,0.13)"></div><div class="b" style="left:240px;top:412px;width:1px;height:21px;background:rgba(0,0,0,0.13)"></div><svg class="b" style="left:8px;top:419px" width="11" height="11" viewBox="0 0 11 11"><path d="M5.5 0.8L0.8 5.5H3.3V9.5H7.7V5.5H10.2Z" fill="#3cc83c" stroke="#157015" stroke-width="1"/></svg><div class="t" style="left:24px;top:414.0px;height:18px;line-height:18px;font-size:12px;color:#111;">CHFJPY</div><div class="t" style="left:-230px;width:400px;text-align:right;top:414.0px;height:18px;line-height:18px;font-size:12px;color:#1c50c0;">147.018</div><div class="t" style="left:-163px;width:400px;text-align:right;top:414.0px;height:18px;line-height:18px;font-size:12px;color:#1c50c0;">147.032</div><div class="t" style="left:-128px;width:400px;text-align:right;top:414.0px;height:18px;line-height:18px;font-size:12px;color:#1c50c0;">14</div><div class="b" style="left:4px;top:433px;width:272px;height:21px;background:#7fffd4"></div><div class="b" style="left:4px;top:433px;width:272px;height:1px;background:rgba(0,0,0,0.13)"></div><div class="b" style="left:104px;top:433px;width:1px;height:21px;background:rgba(0,0,0,0.13)"></div><div class="b" style="left:172px;top:433px;width:1px;height:21px;background:rgba(0,0,0,0.13)"></div><div class="b" style="left:240px;top:433px;width:1px;height:21px;background:rgba(0,0,0,0.13)"></div><svg class="b" style="left:8px;top:440px" width="11" height="11" viewBox="0 0 11 11"><path d="M5.5 0.8L0.8 5.5H3.3V9.5H7.7V5.5H10.2Z" fill="#3cc83c" stroke="#157015" stroke-width="1"/></svg><div class="t" style="left:24px;top:435.0px;height:18px;line-height:18px;font-size:12px;color:#111;">EURAUD</div><div class="t" style="left:-230px;width:400px;text-align:right;top:435.0px;height:18px;line-height:18px;font-size:12px;color:#1c50c0;">1.55743</div><div class="t" style="left:-163px;width:400px;text-align:right;top:435.0px;height:18px;line-height:18px;font-size:12px;color:#1c50c0;">1.55752</div><div class="t" style="left:-128px;width:400px;text-align:right;top:435.0px;height:18px;line-height:18px;font-size:12px;color:#1c50c0;">9</div><div class="b" style="left:4px;top:454px;width:272px;height:21px;background:#7fffd4"></div><div class="b" style="left:4px;top:454px;width:272px;height:1px;background:rgba(0,0,0,0.13)"></div><div class="b" style="left:104px;top:454px;width:1px;height:21px;background:rgba(0,0,0,0.13)"></div><div class="b" style="left:172px;top:454px;width:1px;height:21px;background:rgba(0,0,0,0.13)"></div><div class="b" style="left:240px;top:454px;width:1px;height:21px;background:rgba(0,0,0,0.13)"></div><svg class="b" style="left:8px;top:461px" width="11" height="11" viewBox="0 0 11 11"><path d="M5.5 0.8L0.8 5.5H3.3V9.5H7.7V5.5H10.2Z" fill="#3cc83c" stroke="#157015" stroke-width="1"/></svg><div class="t" style="left:24px;top:456.0px;height:18px;line-height:18px;font-size:12px;color:#111;">EURCHF</div><div class="t" style="left:-230px;width:400px;text-align:right;top:456.0px;height:18px;line-height:18px;font-size:12px;color:#1c50c0;">0.98616</div><div class="t" style="left:-163px;width:400px;text-align:right;top:456.0px;height:18px;line-height:18px;font-size:12px;color:#1c50c0;">0.98622</div><div class="t" style="left:-128px;width:400px;text-align:right;top:456.0px;height:18px;line-height:18px;font-size:12px;color:#1c50c0;">6</div><div class="b" style="left:4px;top:475px;width:272px;height:21px;background:#7fffd4"></div><div class="b" style="left:4px;top:475px;width:272px;height:1px;background:rgba(0,0,0,0.13)"></div><div class="b" style="left:104px;top:475px;width:1px;height:21px;background:rgba(0,0,0,0.13)"></div><div class="b" style="left:172px;top:475px;width:1px;height:21px;background:rgba(0,0,0,0.13)"></div><div class="b" style="left:240px;top:475px;width:1px;height:21px;background:rgba(0,0,0,0.13)"></div><svg class="b" style="left:8px;top:482px" width="11" height="11" viewBox="0 0 11 11"><path d="M5.5 0.8L0.8 5.5H3.3V9.5H7.7V5.5H10.2Z" fill="#3cc83c" stroke="#157015" stroke-width="1"/></svg><div class="t" style="left:24px;top:477.0px;height:18px;line-height:18px;font-size:12px;color:#111;">EURCAD</div><div class="t" style="left:-230px;width:400px;text-align:right;top:477.0px;height:18px;line-height:18px;font-size:12px;color:#1c50c0;">1.43700</div><div class="t" style="left:-163px;width:400px;text-align:right;top:477.0px;height:18px;line-height:18px;font-size:12px;color:#1c50c0;">1.43707</div><div class="t" style="left:-128px;width:400px;text-align:right;top:477.0px;height:18px;line-height:18px;font-size:12px;color:#1c50c0;">7</div><div class="b" style="left:4px;top:496px;width:272px;height:21px;background:#7fffd4"></div><div class="b" style="left:4px;top:496px;width:272px;height:1px;background:rgba(0,0,0,0.13)"></div><div class="b" style="left:104px;top:496px;width:1px;height:21px;background:rgba(0,0,0,0.13)"></div><div class="b" style="left:172px;top:496px;width:1px;height:21px;background:rgba(0,0,0,0.13)"></div><div class="b" style="left:240px;top:496px;width:1px;height:21px;background:rgba(0,0,0,0.13)"></div><svg class="b" style="left:8px;top:503px" width="11" height="11" viewBox="0 0 11 11"><path d="M5.5 0.8L0.8 5.5H3.3V9.5H7.7V5.5H10.2Z" fill="#3cc83c" stroke="#157015" stroke-width="1"/></svg><div class="t" style="left:24px;top:498.0px;height:18px;line-height:18px;font-size:12px;color:#111;">EURDKK</div><div class="t" style="left:-230px;width:400px;text-align:right;top:498.0px;height:18px;line-height:18px;font-size:12px;color:#1c50c0;">7.43732</div><div class="t" style="left:-163px;width:400px;text-align:right;top:498.0px;height:18px;line-height:18px;font-size:12px;color:#1c50c0;">7.43841</div><div class="t" style="left:-128px;width:400px;text-align:right;top:498.0px;height:18px;line-height:18px;font-size:12px;color:#1c50c0;">109</div><div class="b" style="left:4px;top:517px;width:272px;height:21px;background:#7fffd4"></div><div class="b" style="left:4px;top:517px;width:272px;height:1px;background:rgba(0,0,0,0.13)"></div><div class="b" style="left:104px;top:517px;width:1px;height:21px;background:rgba(0,0,0,0.13)"></div><div class="b" style="left:172px;top:517px;width:1px;height:21px;background:rgba(0,0,0,0.13)"></div><div class="b" style="left:240px;top:517px;width:1px;height:21px;background:rgba(0,0,0,0.13)"></div><svg class="b" style="left:8px;top:524px" width="11" height="11" viewBox="0 0 11 11"><path d="M5.5 0.8L0.8 5.5H3.3V9.5H7.7V5.5H10.2Z" fill="#3cc83c" stroke="#157015" stroke-width="1"/></svg><div class="t" style="left:24px;top:519.0px;height:18px;line-height:18px;font-size:12px;color:#111;">EURHKD</div><div class="t" style="left:-230px;width:400px;text-align:right;top:519.0px;height:18px;line-height:18px;font-size:12px;color:#1c50c0;">8.20380</div><div class="t" style="left:-163px;width:400px;text-align:right;top:519.0px;height:18px;line-height:18px;font-size:12px;color:#1c50c0;">8.20392</div><div class="t" style="left:-128px;width:400px;text-align:right;top:519.0px;height:18px;line-height:18px;font-size:12px;color:#1c50c0;">12</div><div class="b" style="left:4px;top:538px;width:272px;height:21px;background:#7fffd4"></div><div class="b" style="left:4px;top:538px;width:272px;height:1px;background:rgba(0,0,0,0.13)"></div><div class="b" style="left:104px;top:538px;width:1px;height:21px;background:rgba(0,0,0,0.13)"></div><div class="b" style="left:172px;top:538px;width:1px;height:21px;background:rgba(0,0,0,0.13)"></div><div class="b" style="left:240px;top:538px;width:1px;height:21px;background:rgba(0,0,0,0.13)"></div><svg class="b" style="left:8px;top:545px" width="11" height="11" viewBox="0 0 11 11"><path d="M5.5 0.8L0.8 5.5H3.3V9.5H7.7V5.5H10.2Z" fill="#3cc83c" stroke="#157015" stroke-width="1"/></svg><div class="t" style="left:24px;top:540.0px;height:18px;line-height:18px;font-size:12px;color:#111;">EURGBP</div><div class="t" style="left:-230px;width:400px;text-align:right;top:540.0px;height:18px;line-height:18px;font-size:12px;color:#1c50c0;">0.85848</div><div class="t" style="left:-163px;width:400px;text-align:right;top:540.0px;height:18px;line-height:18px;font-size:12px;color:#1c50c0;">0.85852</div><div class="t" style="left:-128px;width:400px;text-align:right;top:540.0px;height:18px;line-height:18px;font-size:12px;color:#1c50c0;">4</div><div class="b" style="left:4px;top:559px;width:272px;height:21px;background:#7fffd4"></div><div class="b" style="left:4px;top:559px;width:272px;height:1px;background:rgba(0,0,0,0.13)"></div><div class="b" style="left:104px;top:559px;width:1px;height:21px;background:rgba(0,0,0,0.13)"></div><div class="b" style="left:172px;top:559px;width:1px;height:21px;background:rgba(0,0,0,0.13)"></div><div class="b" style="left:240px;top:559px;width:1px;height:21px;background:rgba(0,0,0,0.13)"></div><svg class="b" style="left:8px;top:566px" width="11" height="11" viewBox="0 0 11 11"><path d="M5.5 9.5L0.8 4.8H3.3V0.8H7.7V4.8H10.2Z" fill="#f07848" stroke="#8a3010" stroke-width="1"/></svg><div class="t" style="left:24px;top:561.0px;height:18px;line-height:18px;font-size:12px;color:#111;">EURJPY</div><div class="t" style="left:-230px;width:400px;text-align:right;top:561.0px;height:18px;line-height:18px;font-size:12px;color:#a0603a;">144.987</div><div class="t" style="left:-163px;width:400px;text-align:right;top:561.0px;height:18px;line-height:18px;font-size:12px;color:#a0603a;">144.991</div><div class="t" style="left:-128px;width:400px;text-align:right;top:561.0px;height:18px;line-height:18px;font-size:12px;color:#a0603a;">4</div><div class="b" style="left:4px;top:580px;width:272px;height:21px;background:#7fffd4"></div><div class="b" style="left:4px;top:580px;width:272px;height:1px;background:rgba(0,0,0,0.13)"></div><div class="b" style="left:104px;top:580px;width:1px;height:21px;background:rgba(0,0,0,0.13)"></div><div class="b" style="left:172px;top:580px;width:1px;height:21px;background:rgba(0,0,0,0.13)"></div><div class="b" style="left:240px;top:580px;width:1px;height:21px;background:rgba(0,0,0,0.13)"></div><svg class="b" style="left:8px;top:587px" width="11" height="11" viewBox="0 0 11 11"><path d="M5.5 9.5L0.8 4.8H3.3V0.8H7.7V4.8H10.2Z" fill="#f07848" stroke="#8a3010" stroke-width="1"/></svg><div class="t" style="left:24px;top:582.0px;height:18px;line-height:18px;font-size:12px;color:#111;">EURNOK</div><div class="t" style="left:-230px;width:400px;text-align:right;top:582.0px;height:18px;line-height:18px;font-size:12px;color:#a0603a;">10.50820</div><div class="t" style="left:-163px;width:400px;text-align:right;top:582.0px;height:18px;line-height:18px;font-size:12px;color:#a0603a;">10.51372</div><div class="t" style="left:-128px;width:400px;text-align:right;top:582.0px;height:18px;line-height:18px;font-size:12px;color:#a0603a;">552</div><div class="b" style="left:4px;top:601px;width:272px;height:21px;background:#7fffd4"></div><div class="b" style="left:4px;top:601px;width:272px;height:1px;background:rgba(0,0,0,0.13)"></div><div class="b" style="left:104px;top:601px;width:1px;height:21px;background:rgba(0,0,0,0.13)"></div><div class="b" style="left:172px;top:601px;width:1px;height:21px;background:rgba(0,0,0,0.13)"></div><div class="b" style="left:240px;top:601px;width:1px;height:21px;background:rgba(0,0,0,0.13)"></div><svg class="b" style="left:8px;top:608px" width="11" height="11" viewBox="0 0 11 11"><path d="M5.5 0.8L0.8 5.5H3.3V9.5H7.7V5.5H10.2Z" fill="#3cc83c" stroke="#157015" stroke-width="1"/></svg><div class="t" style="left:24px;top:603.0px;height:18px;line-height:18px;font-size:12px;color:#111;">EURNZD</div><div class="t" style="left:-230px;width:400px;text-align:right;top:603.0px;height:18px;line-height:18px;font-size:12px;color:#1c50c0;">1.64820</div><div class="t" style="left:-163px;width:400px;text-align:right;top:603.0px;height:18px;line-height:18px;font-size:12px;color:#1c50c0;">1.64838</div><div class="t" style="left:-128px;width:400px;text-align:right;top:603.0px;height:18px;line-height:18px;font-size:12px;color:#1c50c0;">18</div><div class="b" style="left:4px;top:622px;width:272px;height:21px;background:#7fffd4"></div><div class="b" style="left:4px;top:622px;width:272px;height:1px;background:rgba(0,0,0,0.13)"></div><div class="b" style="left:104px;top:622px;width:1px;height:21px;background:rgba(0,0,0,0.13)"></div><div class="b" style="left:172px;top:622px;width:1px;height:21px;background:rgba(0,0,0,0.13)"></div><div class="b" style="left:240px;top:622px;width:1px;height:21px;background:rgba(0,0,0,0.13)"></div><svg class="b" style="left:8px;top:629px" width="11" height="11" viewBox="0 0 11 11"><path d="M5.5 0.8L0.8 5.5H3.3V9.5H7.7V5.5H10.2Z" fill="#3cc83c" stroke="#157015" stroke-width="1"/></svg><div class="t" style="left:24px;top:624.0px;height:18px;line-height:18px;font-size:12px;color:#111;">EURPLN</div><div class="t" style="left:-230px;width:400px;text-align:right;top:624.0px;height:18px;line-height:18px;font-size:12px;color:#1c50c0;">4.68466</div><div class="t" style="left:-163px;width:400px;text-align:right;top:624.0px;height:18px;line-height:18px;font-size:12px;color:#1c50c0;">4.68650</div><div class="t" style="left:-128px;width:400px;text-align:right;top:624.0px;height:18px;line-height:18px;font-size:12px;color:#1c50c0;">184</div><div class="b" style="left:4px;top:643px;width:272px;height:21px;background:#7fffd4"></div><div class="b" style="left:4px;top:643px;width:272px;height:1px;background:rgba(0,0,0,0.13)"></div><div class="b" style="left:104px;top:643px;width:1px;height:21px;background:rgba(0,0,0,0.13)"></div><div class="b" style="left:172px;top:643px;width:1px;height:21px;background:rgba(0,0,0,0.13)"></div><div class="b" style="left:240px;top:643px;width:1px;height:21px;background:rgba(0,0,0,0.13)"></div><svg class="b" style="left:8px;top:650px" width="11" height="11" viewBox="0 0 11 11"><path d="M5.5 9.5L0.8 4.8H3.3V0.8H7.7V4.8H10.2Z" fill="#f07848" stroke="#8a3010" stroke-width="1"/></svg><div class="t" style="left:24px;top:645.0px;height:18px;line-height:18px;font-size:12px;color:#111;">EURSEK</div><div class="t" style="left:-230px;width:400px;text-align:right;top:645.0px;height:18px;line-height:18px;font-size:12px;color:#a0603a;">10.87067</div><div class="t" style="left:-163px;width:400px;text-align:right;top:645.0px;height:18px;line-height:18px;font-size:12px;color:#a0603a;">10.87463</div><div class="t" style="left:-128px;width:400px;text-align:right;top:645.0px;height:18px;line-height:18px;font-size:12px;color:#a0603a;">396</div><div class="b" style="left:4px;top:664px;width:272px;height:21px;background:#7fffd4"></div><div class="b" style="left:4px;top:664px;width:272px;height:1px;background:rgba(0,0,0,0.13)"></div><div class="b" style="left:104px;top:664px;width:1px;height:21px;background:rgba(0,0,0,0.13)"></div><div class="b" style="left:172px;top:664px;width:1px;height:21px;background:rgba(0,0,0,0.13)"></div><div class="b" style="left:240px;top:664px;width:1px;height:21px;background:rgba(0,0,0,0.13)"></div><svg class="b" style="left:8px;top:671px" width="11" height="11" viewBox="0 0 11 11"><path d="M5.5 0.8L0.8 5.5H3.3V9.5H7.7V5.5H10.2Z" fill="#3cc83c" stroke="#157015" stroke-width="1"/></svg><div class="t" style="left:24px;top:666.0px;height:18px;line-height:18px;font-size:12px;color:#111;">EURSGD</div><div class="t" style="left:-230px;width:400px;text-align:right;top:666.0px;height:18px;line-height:18px;font-size:12px;color:#1c50c0;">1.42866</div><div class="t" style="left:-163px;width:400px;text-align:right;top:666.0px;height:18px;line-height:18px;font-size:12px;color:#1c50c0;">1.42889</div><div class="t" style="left:-128px;width:400px;text-align:right;top:666.0px;height:18px;line-height:18px;font-size:12px;color:#1c50c0;">23</div></div>
<div class="b" style="left:276px;top:94px;width:17px;height:577px;background:#f0f0f0"></div>
<svg class="b" style="left:280px;top:99px" width="10" height="7" viewBox="0 0 10 7"><path d="M1 6l4-4 4 4" fill="none" stroke="#555" stroke-width="2"/></svg>
<div class="b" style="left:278px;top:111px;width:14px;height:172px;background:#cdcdcd"></div>
<svg class="b" style="left:280px;top:659px" width="10" height="7" viewBox="0 0 10 7"><path d="M1 1l4 4 4-4" fill="none" stroke="#555" stroke-width="2"/></svg>
<div class="b" style="left:3px;top:670px;width:291px;height:1px;background:#a0a0a0"></div>
<div class="b" style="left:6px;top:670px;width:68px;height:23px;background:#fff;border:1.5px solid #111;border-top:none"></div>
<div class="t" style="left:16px;top:672.0px;height:18px;line-height:18px;font-size:12px;color:#000;">交易品种</div>
<div class="t" style="left:84px;top:672.0px;height:18px;line-height:18px;font-size:12px;color:#777;">即时图</div>
<div class="b" style="left:129px;top:673px;width:1px;height:16px;background:#555"></div>
<div class="b" style="left:0px;top:697px;width:298px;height:1px;background:#a0a0a0"></div>
<div class="b" style="left:298px;top:77px;width:1622px;height:600px;background:#000"></div>
<div class="b" style="left:1918px;top:77px;width:2px;height:600px;background:#f0f0f0"></div>
<div class="b" style="left:298px;top:77px;width:1px;height:600px;background:#a0a0a0"></div>
<div class="b" style="left:301px;top:80px;width:1572px;height:576px;border:1px solid #fff"></div>
<div class="b" style="left:302px;top:402px;width:2px;height:10px;background:#8ad88a"></div>
<div class="b" style="left:302px;top:427px;width:2px;height:14px;background:#8ad88a"></div>
<svg class="b" style="left:1551px;top:80px" width="10" height="6" viewBox="0 0 10 6"><path d="M0 0h10L5 5z" fill="#9a9a9a"/></svg>
<div class="b" style="left:1873px;top:89px;width:3px;height:1px;background:#fff"></div>
<div class="t" style="left:1877.5px;top:81.6px;height:15px;line-height:15px;font-size:10px;color:#fff;letter-spacing:-0.45px">0.95570</div>
<div class="b" style="left:1873px;top:122px;width:3px;height:1px;background:#fff"></div>
<div class="t" style="left:1877.5px;top:114.8px;height:15px;line-height:15px;font-size:10px;color:#fff;letter-spacing:-0.45px">0.95425</div>
<div class="b" style="left:1873px;top:154px;width:3px;height:1px;background:#fff"></div>
<div class="t" style="left:1877.5px;top:147.4px;height:15px;line-height:15px;font-size:10px;color:#fff;letter-spacing:-0.45px">0.95280</div>
<div class="b" style="left:1873px;top:188px;width:3px;height:1px;background:#fff"></div>
<div class="t" style="left:1877.5px;top:180.5px;height:15px;line-height:15px;font-size:10px;color:#fff;letter-spacing:-0.45px">0.95135</div>
<div class="b" style="left:1873px;top:221px;width:3px;height:1px;background:#fff"></div>
<div class="t" style="left:1877.5px;top:213.7px;height:15px;line-height:15px;font-size:10px;color:#fff;letter-spacing:-0.45px">0.94985</div>
<div class="b" style="left:1873px;top:254px;width:3px;height:1px;background:#fff"></div>
<div class="t" style="left:1877.5px;top:247.5px;height:15px;line-height:15px;font-size:10px;color:#fff;letter-spacing:-0.45px">0.94835</div>
<div class="b" style="left:1873px;top:288px;width:3px;height:1px;background:#fff"></div>
<div class="t" style="left:1877.5px;top:281.2px;height:15px;line-height:15px;font-size:10px;color:#fff;letter-spacing:-0.45px">0.94685</div>
<div class="b" style="left:1873px;top:321px;width:3px;height:1px;background:#fff"></div>
<div class="t" style="left:1877.5px;top:314.4px;height:15px;line-height:15px;font-size:10px;color:#fff;letter-spacing:-0.45px">0.94540</div>
<div class="b" style="left:1873px;top:354px;width:3px;height:1px;background:#fff"></div>
<div class="t" style="left:1877.5px;top:347.3px;height:15px;line-height:15px;font-size:10px;color:#fff;letter-spacing:-0.45px">0.94395</div>
<div class="b" style="left:1873px;top:387px;width:3px;height:1px;background:#fff"></div>
<div class="t" style="left:1877.5px;top:380.3px;height:15px;line-height:15px;font-size:10px;color:#fff;letter-spacing:-0.45px">0.94250</div>
<div class="b" style="left:1873px;top:420px;width:3px;height:1px;background:#fff"></div>
<div class="t" style="left:1877.5px;top:413.5px;height:15px;line-height:15px;font-size:10px;color:#fff;letter-spacing:-0.45px">0.94100</div>
<div class="b" style="left:1873px;top:455px;width:3px;height:1px;background:#fff"></div>
<div class="t" style="left:1877.5px;top:447.6px;height:15px;line-height:15px;font-size:10px;color:#fff;letter-spacing:-0.45px">0.93950</div>
<div class="b" style="left:1873px;top:488px;width:3px;height:1px;background:#fff"></div>
<div class="t" style="left:1877.5px;top:481.5px;height:15px;line-height:15px;font-size:10px;color:#fff;letter-spacing:-0.45px">0.93800</div>
<div class="b" style="left:1873px;top:522px;width:3px;height:1px;background:#fff"></div>
<div class="t" style="left:1877.5px;top:514.5px;height:15px;line-height:15px;font-size:10px;color:#fff;letter-spacing:-0.45px">0.93655</div>
<div class="b" style="left:1873px;top:555px;width:3px;height:1px;background:#fff"></div>
<div class="t" style="left:1877.5px;top:547.6px;height:15px;line-height:15px;font-size:10px;color:#fff;letter-spacing:-0.45px">0.93510</div>
<div class="b" style="left:1873px;top:588px;width:3px;height:1px;background:#fff"></div>
<div class="t" style="left:1877.5px;top:580.7px;height:15px;line-height:15px;font-size:10px;color:#fff;letter-spacing:-0.45px">0.93365</div>
<div class="b" style="left:1873px;top:620px;width:3px;height:1px;background:#fff"></div>
<div class="t" style="left:1877.5px;top:613.5px;height:15px;line-height:15px;font-size:10px;color:#fff;letter-spacing:-0.45px">0.93215</div>
<div class="b" style="left:1873px;top:654px;width:3px;height:1px;background:#fff"></div>
<div class="t" style="left:1877.5px;top:647.3px;height:15px;line-height:15px;font-size:10px;color:#fff;letter-spacing:-0.45px">0.93070</div>
<div class="b" style="left:1874px;top:563px;width:40px;height:11px;background:#fff"></div>
<div class="t" style="left:1876px;top:561.0px;height:15px;line-height:15px;font-size:10px;color:#000;letter-spacing:-0.45px">0.93447</div>
<div class="b" style="left:301px;top:656px;width:1px;height:4px;background:#fff"></div>
<div class="t" style="left:302px;top:659.0px;height:15px;line-height:15px;font-size:10px;color:#fff;letter-spacing:-0.3px">24 Nov 2022</div>
<div class="b" style="left:365px;top:656px;width:1px;height:4px;background:#fff"></div>
<div class="t" style="left:366px;top:659.0px;height:15px;line-height:15px;font-size:10px;color:#fff;letter-spacing:-0.3px">25 Nov 01:00</div>
<div class="b" style="left:429px;top:656px;width:1px;height:4px;background:#fff"></div>
<div class="t" style="left:430px;top:659.0px;height:15px;line-height:15px;font-size:10px;color:#fff;letter-spacing:-0.3px">25 Nov 17:00</div>
<div class="b" style="left:493px;top:656px;width:1px;height:4px;background:#fff"></div>
<div class="t" style="left:494px;top:659.0px;height:15px;line-height:15px;font-size:10px;color:#fff;letter-spacing:-0.3px">28 Nov 09:00</div>
<div class="b" style="left:557px;top:656px;width:1px;height:4px;background:#fff"></div>
<div class="t" style="left:558px;top:659.0px;height:15px;line-height:15px;font-size:10px;color:#fff;letter-spacing:-0.3px">29 Nov 01:00</div>
<div class="b" style="left:621px;top:656px;width:1px;height:4px;background:#fff"></div>
<div class="t" style="left:622px;top:659.0px;height:15px;line-height:15px;font-size:10px;color:#fff;letter-spacing:-0.3px">29 Nov 17:00</div>
<div class="b" style="left:685px;top:656px;width:1px;height:4px;background:#fff"></div>
<div class="t" style="left:686px;top:659.0px;height:15px;line-height:15px;font-size:10px;color:#fff;letter-spacing:-0.3px">30 Nov 09:00</div>
<div class="b" style="left:749px;top:656px;width:1px;height:4px;background:#fff"></div>
<div class="t" style="left:750px;top:659.0px;height:15px;line-height:15px;font-size:10px;color:#fff;letter-spacing:-0.3px">1 Dec 01:00</div>
<div class="b" style="left:813px;top:656px;width:1px;height:4px;background:#fff"></div>
<div class="t" style="left:814px;top:659.0px;height:15px;line-height:15px;font-size:10px;color:#fff;letter-spacing:-0.3px">1 Dec 17:00</div>
<div class="b" style="left:877px;top:656px;width:1px;height:4px;background:#fff"></div>
<div class="t" style="left:878px;top:659.0px;height:15px;line-height:15px;font-size:10px;color:#fff;letter-spacing:-0.3px">2 Dec 09:00</div>
<div class="b" style="left:941px;top:656px;width:1px;height:4px;background:#fff"></div>
<div class="t" style="left:942px;top:659.0px;height:15px;line-height:15px;font-size:10px;color:#fff;letter-spacing:-0.3px">5 Dec 01:00</div>
<div class="b" style="left:1005px;top:656px;width:1px;height:4px;background:#fff"></div>
<div class="t" style="left:1006px;top:659.0px;height:15px;line-height:15px;font-size:10px;color:#fff;letter-spacing:-0.3px">5 Dec 17:00</div>
<div class="b" style="left:1069px;top:656px;width:1px;height:4px;background:#fff"></div>
<div class="t" style="left:1070px;top:659.0px;height:15px;line-height:15px;font-size:10px;color:#fff;letter-spacing:-0.3px">6 Dec 09:00</div>
<div class="b" style="left:1133px;top:656px;width:1px;height:4px;background:#fff"></div>
<div class="t" style="left:1134px;top:659.0px;height:15px;line-height:15px;font-size:10px;color:#fff;letter-spacing:-0.3px">7 Dec 01:00</div>
<div class="b" style="left:1197px;top:656px;width:1px;height:4px;background:#fff"></div>
<div class="t" style="left:1198px;top:659.0px;height:15px;line-height:15px;font-size:10px;color:#fff;letter-spacing:-0.3px">7 Dec 17:00</div>
<div class="b" style="left:1261px;top:656px;width:1px;height:4px;background:#fff"></div>
<div class="t" style="left:1262px;top:659.0px;height:15px;line-height:15px;font-size:10px;color:#fff;letter-spacing:-0.3px">8 Dec 09:00</div>
<div class="b" style="left:1325px;top:656px;width:1px;height:4px;background:#fff"></div>
<div class="t" style="left:1326px;top:659.0px;height:15px;line-height:15px;font-size:10px;color:#fff;letter-spacing:-0.3px">9 Dec 01:00</div>
<div class="b" style="left:1389px;top:656px;width:1px;height:4px;background:#fff"></div>
<div class="t" style="left:1390px;top:659.0px;height:15px;line-height:15px;font-size:10px;color:#fff;letter-spacing:-0.3px">9 Dec 17:00</div>
<div class="b" style="left:1453px;top:656px;width:1px;height:4px;background:#fff"></div>
<div class="t" style="left:1454px;top:659.0px;height:15px;line-height:15px;font-size:10px;color:#fff;letter-spacing:-0.3px">12 Dec 09:00</div>
<div class="b" style="left:1517px;top:656px;width:1px;height:4px;background:#fff"></div>
<div class="t" style="left:1518px;top:659.0px;height:15px;line-height:15px;font-size:10px;color:#fff;letter-spacing:-0.3px">13 Dec 01:00</div>
<div class="b" style="left:312px;top:97px;width:780px;height:30px;border:2px solid #5c8a5c;background:#000"></div>
<div class="b" style="left:321px;top:101px;width:22px;height:21px;background:#e8f030;border-radius:4px;border:1px solid #f4f4a8"></div>
<div class="t" style="left:323.5px;top:100.0px;height:16px;line-height:16px;font-size:11px;color:#000;font-weight:bold;letter-spacing:-0.3px;transform:scaleX(1.2);transform-origin:left;-webkit-text-stroke:0.6px #000">FX</div>
<div class="t" style="left:322.3px;top:112.0px;height:10px;line-height:10px;font-size:7px;color:#000;font-weight:bold;letter-spacing:-0.3px">DATA</div>
<div class="t" style="left:681.5px;top:101.0px;height:21px;line-height:21px;font-size:14px;color:#dcdcdc;">平台时间:</div>
<div class="t" style="left:746px;top:100.5px;height:22px;line-height:22px;font-size:15px;color:#dcdcdc;letter-spacing:-0.55px">2022.12.13 09:41:32</div>
<div class="t" style="left:887.5px;top:101.0px;height:21px;line-height:21px;font-size:14px;color:#40c4c0;letter-spacing:0.95px">收盘倒计时_H1&gt;18:28</div>
<div class="b" style="left:1062px;top:102px;width:22px;height:20px;border:1px solid #707070;border-radius:2px"></div>
<div class="b" style="left:1068px;top:111px;width:9px;height:2px;background:#e8e8e8"></div>
<div class="b" style="left:312px;top:131px;width:780px;height:504px;border:2px solid #5c8a5c;background:#000"></div>
<div class="b" style="left:314px;top:173px;width:776px;height:2px;background:#5c8a5c"></div>
<div class="b" style="left:314px;top:199px;width:776px;height:402px;background:#24262e"></div>
<div class="b" style="left:314px;top:601px;width:776px;height:2px;background:#5c8a5c"></div>
<div class="b" style="left:314px;top:603px;width:776px;height:30px;background:#24262e"></div>
<div class="b" style="left:332px;top:147px;width:68px;height:24px;border:1px solid #6a8a6a;border-radius:3px"></div>
<div class="t" style="left:266.0px;width:200px;text-align:center;top:150.5px;height:18px;line-height:18px;font-size:12px;color:#e4e4e4;">全局统计</div>
<div class="b" style="left:412px;top:147px;width:68px;height:24px;border:1px solid #6a8a6a;border-radius:3px"></div>
<div class="t" style="left:346.0px;width:200px;text-align:center;top:150.5px;height:18px;line-height:18px;font-size:12px;color:#e4e4e4;">按日统计</div>
<div class="b" style="left:492px;top:147px;width:68px;height:24px;border:1px solid #6a8a6a;border-radius:3px"></div>
<div class="t" style="left:426.0px;width:200px;text-align:center;top:150.5px;height:18px;line-height:18px;font-size:12px;color:#e4e4e4;">按周统计</div>
<div class="b" style="left:572px;top:147px;width:68px;height:24px;background:#1e8c1e;border:1px solid #3aa83a;border-radius:3px"></div>
<div class="t" style="left:506.0px;width:200px;text-align:center;top:150.5px;height:18px;line-height:18px;font-size:12px;color:#f0fff0;">按月统计</div>
<div class="b" style="left:652px;top:147px;width:68px;height:24px;border:1px solid #6a8a6a;border-radius:3px"></div>
<div class="t" style="left:586.0px;width:200px;text-align:center;top:150.5px;height:18px;line-height:18px;font-size:12px;color:#e4e4e4;">按年统计</div>
<div class="b" style="left:733px;top:147px;width:68px;height:24px;border:1px solid #6a8a6a;border-radius:3px"></div>
<div class="t" style="left:667.0px;width:200px;text-align:center;top:150.5px;height:18px;line-height:18px;font-size:12px;color:#e4e4e4;">专业数据</div>
<div class="b" style="left:813px;top:147px;width:68px;height:24px;border:1px solid #6a8a6a;border-radius:3px"></div>
<div class="t" style="left:747.0px;width:200px;text-align:center;top:150.5px;height:18px;line-height:18px;font-size:12px;color:#e4e4e4;">交易轨迹</div>
<div class="b" style="left:745px;top:130px;width:22px;height:9px;background:#e8922e;border-radius:2px;border:1px solid #f4b060"></div>
<svg class="b" style="left:751px;top:138px" width="5" height="5" viewBox="0 0 5 5"><path d="M0 0h5L1 5z" fill="#e8922e"/></svg>
<div class="t" style="left:741.0px;width:30px;text-align:center;top:129.2px;height:11px;line-height:11px;font-size:7.5px;color:#fff8d0;font-weight:bold;letter-spacing:0.3px">HOT</div>
<div class="t" style="left:897px;top:136.0px;height:16px;line-height:16px;font-size:11px;color:#d8d8d8;">帐户货币:USD</div>
<div class="t" style="left:897px;top:153.5px;height:16px;line-height:16px;font-size:11px;color:#d8d8d8;">浮亏警报-OFF</div>
<div class="t" style="left:987px;top:136.0px;height:16px;line-height:16px;font-size:11px;color:#d8d8d8;">暴仓比例:50%</div>
<div class="t" style="left:987px;top:153.5px;height:16px;line-height:16px;font-size:11px;color:#d8d8d8;">报告推送-OFF</div>
<div class="t" style="left:338px;top:178.0px;height:17px;line-height:17px;font-size:11.5px;color:#e8e8e8;">日 期</div>
<div class="t" style="left:407px;top:178.0px;height:17px;line-height:17px;font-size:11.5px;color:#e8e8e8;">单 量</div>
<div class="t" style="left:487px;top:178.0px;height:17px;line-height:17px;font-size:11.5px;color:#e8e8e8;">手 数</div>
<div class="t" style="left:564px;top:178.0px;height:17px;line-height:17px;font-size:11.5px;color:#e8e8e8;">盈 亏</div>
<div class="t" style="left:650px;top:178.0px;height:17px;line-height:17px;font-size:11.5px;color:#e8e8e8;">盈利率</div>
<div class="t" style="left:732px;top:178.0px;height:17px;line-height:17px;font-size:11.5px;color:#e8e8e8;">最大回撤</div>
<div class="t" style="left:836px;top:178.0px;height:17px;line-height:17px;font-size:11.5px;color:#e8e8e8;">最大浮亏</div>
<div class="t" style="left:936px;top:178.0px;height:17px;line-height:17px;font-size:11.5px;color:#e8e8e8;">余 额</div>
<div class="t" style="left:322px;top:201.5px;height:18px;line-height:18px;font-size:12px;color:#e65a32;">2022.12</div>
<div class="t" style="left:418px;top:201.5px;height:18px;line-height:18px;font-size:12px;color:#e65a32;">106</div>
<div class="t" style="left:488px;top:201.5px;height:18px;line-height:18px;font-size:12px;color:#e65a32;">3.09</div>
<div class="t" style="left:564px;top:201.5px;height:18px;line-height:18px;font-size:12px;color:#e65a32;">341.50</div>
<div class="t" style="left:650px;top:201.5px;height:18px;line-height:18px;font-size:12px;color:#e65a32;">6.31%</div>
<div class="t" style="left:737px;top:201.5px;height:18px;line-height:18px;font-size:12px;color:#e65a32;">-0.01%</div>
<div class="t" style="left:842px;top:201.5px;height:18px;line-height:18px;font-size:12px;color:#e65a32;">-0.82</div>
<div class="t" style="left:937px;top:201.5px;height:18px;line-height:18px;font-size:12px;color:#e65a32;">8886.55</div>
<div class="t" style="left:322px;top:219.5px;height:18px;line-height:18px;font-size:12px;color:#e65a32;">2022.11</div>
<div class="t" style="left:418px;top:219.5px;height:18px;line-height:18px;font-size:12px;color:#e65a32;">204</div>
<div class="t" style="left:488px;top:219.5px;height:18px;line-height:18px;font-size:12px;color:#e65a32;">5.43</div>
<div class="t" style="left:564px;top:219.5px;height:18px;line-height:18px;font-size:12px;color:#e65a32;">648.36</div>
<div class="t" style="left:650px;top:219.5px;height:18px;line-height:18px;font-size:12px;color:#e65a32;">11.98%</div>
<div class="t" style="left:737px;top:219.5px;height:18px;line-height:18px;font-size:12px;color:#e65a32;">0.00%</div>
<div class="t" style="left:842px;top:219.5px;height:18px;line-height:18px;font-size:12px;color:#e65a32;">0.00</div>
<div class="t" style="left:937px;top:219.5px;height:18px;line-height:18px;font-size:12px;color:#e65a32;">8545.05</div>
<div class="t" style="left:322px;top:237.5px;height:18px;line-height:18px;font-size:12px;color:#e65a32;">2022.10</div>
<div class="t" style="left:418px;top:237.5px;height:18px;line-height:18px;font-size:12px;color:#e65a32;">93</div>
<div class="t" style="left:488px;top:237.5px;height:18px;line-height:18px;font-size:12px;color:#e65a32;">2.99</div>
<div class="t" style="left:564px;top:237.5px;height:18px;line-height:18px;font-size:12px;color:#e65a32;">243.50</div>
<div class="t" style="left:650px;top:237.5px;height:18px;line-height:18px;font-size:12px;color:#e65a32;">4.50%</div>
<div class="t" style="left:737px;top:237.5px;height:18px;line-height:18px;font-size:12px;color:#e65a32;">0.00%</div>
<div class="t" style="left:842px;top:237.5px;height:18px;line-height:18px;font-size:12px;color:#e65a32;">0.00</div>
<div class="t" style="left:937px;top:237.5px;height:18px;line-height:18px;font-size:12px;color:#e65a32;">7896.69</div>
<div class="t" style="left:322px;top:255.5px;height:18px;line-height:18px;font-size:12px;color:#e65a32;">2022.09</div>
<div class="t" style="left:418px;top:255.5px;height:18px;line-height:18px;font-size:12px;color:#e65a32;">242</div>
<div class="t" style="left:488px;top:255.5px;height:18px;line-height:18px;font-size:12px;color:#e65a32;">6.84</div>
<div class="t" style="left:564px;top:255.5px;height:18px;line-height:18px;font-size:12px;color:#e65a32;">786.32</div>
<div class="t" style="left:650px;top:255.5px;height:18px;line-height:18px;font-size:12px;color:#e65a32;">14.53%</div>
<div class="t" style="left:737px;top:255.5px;height:18px;line-height:18px;font-size:12px;color:#e65a32;">0.00%</div>
<div class="t" style="left:842px;top:255.5px;height:18px;line-height:18px;font-size:12px;color:#e65a32;">0.00</div>
<div class="t" style="left:937px;top:255.5px;height:18px;line-height:18px;font-size:12px;color:#e65a32;">7653.19</div>
<div class="t" style="left:322px;top:273.5px;height:18px;line-height:18px;font-size:12px;color:#e65a32;">2022.08</div>
<div class="t" style="left:418px;top:273.5px;height:18px;line-height:18px;font-size:12px;color:#e65a32;">146</div>
<div class="t" style="left:488px;top:273.5px;height:18px;line-height:18px;font-size:12px;color:#e65a32;">4.52</div>
<div class="t" style="left:564px;top:273.5px;height:18px;line-height:18px;font-size:12px;color:#e65a32;">481.38</div>
<div class="t" style="left:650px;top:273.5px;height:18px;line-height:18px;font-size:12px;color:#e65a32;">8.89%</div>
<div class="t" style="left:737px;top:273.5px;height:18px;line-height:18px;font-size:12px;color:#e65a32;">0.00%</div>
<div class="t" style="left:842px;top:273.5px;height:18px;line-height:18px;font-size:12px;color:#e65a32;">0.00</div>
<div class="t" style="left:937px;top:273.5px;height:18px;line-height:18px;font-size:12px;color:#e65a32;">6866.87</div>
<div class="t" style="left:322px;top:291.5px;height:18px;line-height:18px;font-size:12px;color:#e65a32;">2022.07</div>
<div class="t" style="left:418px;top:291.5px;height:18px;line-height:18px;font-size:12px;color:#e65a32;">209</div>
<div class="t" style="left:488px;top:291.5px;height:18px;line-height:18px;font-size:12px;color:#e65a32;">3.97</div>
<div class="t" style="left:564px;top:291.5px;height:18px;line-height:18px;font-size:12px;color:#e65a32;">458.56</div>
<div class="t" style="left:650px;top:291.5px;height:18px;line-height:18px;font-size:12px;color:#e65a32;">8.47%</div>
<div class="t" style="left:737px;top:291.5px;height:18px;line-height:18px;font-size:12px;color:#e65a32;">0.00%</div>
<div class="t" style="left:842px;top:291.5px;height:18px;line-height:18px;font-size:12px;color:#e65a32;">0.00</div>
<div class="t" style="left:937px;top:291.5px;height:18px;line-height:18px;font-size:12px;color:#e65a32;">6385.49</div>
<div class="t" style="left:322px;top:309.5px;height:18px;line-height:18px;font-size:12px;color:#e65a32;">2022.06</div>
<div class="t" style="left:418px;top:309.5px;height:18px;line-height:18px;font-size:12px;color:#e65a32;">216</div>
<div class="t" style="left:488px;top:309.5px;height:18px;line-height:18px;font-size:12px;color:#e65a32;">5.16</div>
<div class="t" style="left:564px;top:309.5px;height:18px;line-height:18px;font-size:12px;color:#e65a32;">264.62</div>
<div class="t" style="left:650px;top:309.5px;height:18px;line-height:18px;font-size:12px;color:#e65a32;">4.89%</div>
<div class="t" style="left:737px;top:309.5px;height:18px;line-height:18px;font-size:12px;color:#e65a32;">0.00%</div>
<div class="t" style="left:842px;top:309.5px;height:18px;line-height:18px;font-size:12px;color:#e65a32;">0.00</div>
<div class="t" style="left:937px;top:309.5px;height:18px;line-height:18px;font-size:12px;color:#e65a32;">6026.93</div>
<div class="t" style="left:322px;top:327.5px;height:18px;line-height:18px;font-size:12px;color:#e65a32;">2022.05</div>
<div class="t" style="left:418px;top:327.5px;height:18px;line-height:18px;font-size:12px;color:#e65a32;">172</div>
<div class="t" style="left:488px;top:327.5px;height:18px;line-height:18px;font-size:12px;color:#e65a32;">2.49</div>
<div class="t" style="left:564px;top:327.5px;height:18px;line-height:18px;font-size:12px;color:#e65a32;">349.51</div>
<div class="t" style="left:650px;top:327.5px;height:18px;line-height:18px;font-size:12px;color:#e65a32;">6.46%</div>
<div class="t" style="left:737px;top:327.5px;height:18px;line-height:18px;font-size:12px;color:#e65a32;">0.00%</div>
<div class="t" style="left:842px;top:327.5px;height:18px;line-height:18px;font-size:12px;color:#e65a32;">0.00</div>
<div class="t" style="left:937px;top:327.5px;height:18px;line-height:18px;font-size:12px;color:#e65a32;">5762.31</div>
<div class="t" style="left:322px;top:345.5px;height:18px;line-height:18px;font-size:12px;color:#74747c;">2022.04</div>
<div class="t" style="left:418px;top:345.5px;height:18px;line-height:18px;font-size:12px;color:#74747c;">0</div>
<div class="t" style="left:488px;top:345.5px;height:18px;line-height:18px;font-size:12px;color:#74747c;">0.00</div>
<div class="t" style="left:564px;top:345.5px;height:18px;line-height:18px;font-size:12px;color:#74747c;">0.00</div>
<div class="t" style="left:650px;top:345.5px;height:18px;line-height:18px;font-size:12px;color:#74747c;">0.00%</div>
<div class="t" style="left:737px;top:345.5px;height:18px;line-height:18px;font-size:12px;color:#74747c;">0.00%</div>
<div class="t" style="left:842px;top:345.5px;height:18px;line-height:18px;font-size:12px;color:#74747c;">0.00</div>
<div class="t" style="left:937px;top:345.5px;height:18px;line-height:18px;font-size:12px;color:#74747c;">0.00</div>
<div class="t" style="left:322px;top:363.5px;height:18px;line-height:18px;font-size:12px;color:#74747c;">2022.03</div>
<div class="t" style="left:418px;top:363.5px;height:18px;line-height:18px;font-size:12px;color:#74747c;">0</div>
<div class="t" style="left:488px;top:363.5px;height:18px;line-height:18px;font-size:12px;color:#74747c;">0.00</div>
<div class="t" style="left:564px;top:363.5px;height:18px;line-height:18px;font-size:12px;color:#74747c;">0.00</div>
<div class="t" style="left:650px;top:363.5px;height:18px;line-height:18px;font-size:12px;color:#74747c;">0.00%</div>
<div class="t" style="left:737px;top:363.5px;height:18px;line-height:18px;font-size:12px;color:#74747c;">0.00%</div>
<div class="t" style="left:842px;top:363.5px;height:18px;line-height:18px;font-size:12px;color:#74747c;">0.00</div>
<div class="t" style="left:937px;top:363.5px;height:18px;line-height:18px;font-size:12px;color:#74747c;">0.00</div>
<div class="t" style="left:322px;top:381.5px;height:18px;line-height:18px;font-size:12px;color:#74747c;">2022.02</div>
<div class="t" style="left:418px;top:381.5px;height:18px;line-height:18px;font-size:12px;color:#74747c;">0</div>
<div class="t" style="left:488px;top:381.5px;height:18px;line-height:18px;font-size:12px;color:#74747c;">0.00</div>
<div class="t" style="left:564px;top:381.5px;height:18px;line-height:18px;font-size:12px;color:#74747c;">0.00</div>
<div class="t" style="left:650px;top:381.5px;height:18px;line-height:18px;font-size:12px;color:#74747c;">0.00%</div>
<div class="t" style="left:737px;top:381.5px;height:18px;line-height:18px;font-size:12px;color:#74747c;">0.00%</div>
<div class="t" style="left:842px;top:381.5px;height:18px;line-height:18px;font-size:12px;color:#74747c;">0.00</div>
<div class="t" style="left:937px;top:381.5px;height:18px;line-height:18px;font-size:12px;color:#74747c;">0.00</div>
<div class="t" style="left:322px;top:399.5px;height:18px;line-height:18px;font-size:12px;color:#74747c;">2022.01</div>
<div class="t" style="left:418px;top:399.5px;height:18px;line-height:18px;font-size:12px;color:#74747c;">0</div>
<div class="t" style="left:488px;top:399.5px;height:18px;line-height:18px;font-size:12px;color:#74747c;">0.00</div>
<div class="t" style="left:564px;top:399.5px;height:18px;line-height:18px;font-size:12px;color:#74747c;">0.00</div>
<div class="t" style="left:650px;top:399.5px;height:18px;line-height:18px;font-size:12px;color:#74747c;">0.00%</div>
<div class="t" style="left:737px;top:399.5px;height:18px;line-height:18px;font-size:12px;color:#74747c;">0.00%</div>
<div class="t" style="left:842px;top:399.5px;height:18px;line-height:18px;font-size:12px;color:#74747c;">0.00</div>
<div class="t" style="left:937px;top:399.5px;height:18px;line-height:18px;font-size:12px;color:#74747c;">0.00</div>
<div class="t" style="left:322px;top:417.5px;height:18px;line-height:18px;font-size:12px;color:#74747c;">2021.12</div>
<div class="t" style="left:418px;top:417.5px;height:18px;line-height:18px;font-size:12px;color:#74747c;">0</div>
<div class="t" style="left:488px;top:417.5px;height:18px;line-height:18px;font-size:12px;color:#74747c;">0.00</div>
<div class="t" style="left:564px;top:417.5px;height:18px;line-height:18px;font-size:12px;color:#74747c;">0.00</div>
<div class="t" style="left:650px;top:417.5px;height:18px;line-height:18px;font-size:12px;color:#74747c;">0.00%</div>
<div class="t" style="left:737px;top:417.5px;height:18px;line-height:18px;font-size:12px;color:#74747c;">0.00%</div>
<div class="t" style="left:842px;top:417.5px;height:18px;line-height:18px;font-size:12px;color:#74747c;">0.00</div>
<div class="t" style="left:937px;top:417.5px;height:18px;line-height:18px;font-size:12px;color:#74747c;">0.00</div>
<div class="t" style="left:322px;top:435.5px;height:18px;line-height:18px;font-size:12px;color:#74747c;">2021.11</div>
<div class="t" style="left:418px;top:435.5px;height:18px;line-height:18px;font-size:12px;color:#74747c;">0</div>
<div class="t" style="left:488px;top:435.5px;height:18px;line-height:18px;font-size:12px;color:#74747c;">0.00</div>
<div class="t" style="left:564px;top:435.5px;height:18px;line-height:18px;font-size:12px;color:#74747c;">0.00</div>
<div class="t" style="left:650px;top:435.5px;height:18px;line-height:18px;font-size:12px;color:#74747c;">0.00%</div>
<div class="t" style="left:737px;top:435.5px;height:18px;line-height:18px;font-size:12px;color:#74747c;">0.00%</div>
<div class="t" style="left:842px;top:435.5px;height:18px;line-height:18px;font-size:12px;color:#74747c;">0.00</div>
<div class="t" style="left:937px;top:435.5px;height:18px;line-height:18px;font-size:12px;color:#74747c;">0.00</div>
<div class="t" style="left:322px;top:453.5px;height:18px;line-height:18px;font-size:12px;color:#74747c;">2021.10</div>
<div class="t" style="left:418px;top:453.5px;height:18px;line-height:18px;font-size:12px;color:#74747c;">0</div>
<div class="t" style="left:488px;top:453.5px;height:18px;line-height:18px;font-size:12px;color:#74747c;">0.00</div>
<div class="t" style="left:564px;top:453.5px;height:18px;line-height:18px;font-size:12px;color:#74747c;">0.00</div>
<div class="t" style="left:650px;top:453.5px;height:18px;line-height:18px;font-size:12px;color:#74747c;">0.00%</div>
<div class="t" style="left:737px;top:453.5px;height:18px;line-height:18px;font-size:12px;color:#74747c;">0.00%</div>
<div class="t" style="left:842px;top:453.5px;height:18px;line-height:18px;font-size:12px;color:#74747c;">0.00</div>
<div class="t" style="left:937px;top:453.5px;height:18px;line-height:18px;font-size:12px;color:#74747c;">0.00</div>
<div class="t" style="left:322px;top:471.5px;height:18px;line-height:18px;font-size:12px;color:#74747c;">2021.09</div>
<div class="t" style="left:418px;top:471.5px;height:18px;line-height:18px;font-size:12px;color:#74747c;">0</div>
<div class="t" style="left:488px;top:471.5px;height:18px;line-height:18px;font-size:12px;color:#74747c;">0.00</div>
<div class="t" style="left:564px;top:471.5px;height:18px;line-height:18px;font-size:12px;color:#74747c;">0.00</div>
<div class="t" style="left:650px;top:471.5px;height:18px;line-height:18px;font-size:12px;color:#74747c;">0.00%</div>
<div class="t" style="left:737px;top:471.5px;height:18px;line-height:18px;font-size:12px;color:#74747c;">0.00%</div>
<div class="t" style="left:842px;top:471.5px;height:18px;line-height:18px;font-size:12px;color:#74747c;">0.00</div>
<div class="t" style="left:937px;top:471.5px;height:18px;line-height:18px;font-size:12px;color:#74747c;">0.00</div>
<div class="t" style="left:322px;top:489.5px;height:18px;line-height:18px;font-size:12px;color:#74747c;">2021.08</div>
<div class="t" style="left:418px;top:489.5px;height:18px;line-height:18px;font-size:12px;color:#74747c;">0</div>
<div class="t" style="left:488px;top:489.5px;height:18px;line-height:18px;font-size:12px;color:#74747c;">0.00</div>
<div class="t" style="left:564px;top:489.5px;height:18px;line-height:18px;font-size:12px;color:#74747c;">0.00</div>
<div class="t" style="left:650px;top:489.5px;height:18px;line-height:18px;font-size:12px;color:#74747c;">0.00%</div>
<div class="t" style="left:737px;top:489.5px;height:18px;line-height:18px;font-size:12px;color:#74747c;">0.00%</div>
<div class="t" style="left:842px;top:489.5px;height:18px;line-height:18px;font-size:12px;color:#74747c;">0.00</div>
<div class="t" style="left:937px;top:489.5px;height:18px;line-height:18px;font-size:12px;color:#74747c;">0.00</div>
<div class="t" style="left:322px;top:507.5px;height:18px;line-height:18px;font-size:12px;color:#74747c;">2021.07</div>
<div class="t" style="left:418px;top:507.5px;height:18px;line-height:18px;font-size:12px;color:#74747c;">0</div>
<div class="t" style="left:488px;top:507.5px;height:18px;line-height:18px;font-size:12px;color:#74747c;">0.00</div>
<div class="t" style="left:564px;top:507.5px;height:18px;line-height:18px;font-size:12px;color:#74747c;">0.00</div>
<div class="t" style="left:650px;top:507.5px;height:18px;line-height:18px;font-size:12px;color:#74747c;">0.00%</div>
<div class="t" style="left:737px;top:507.5px;height:18px;line-height:18px;font-size:12px;color:#74747c;">0.00%</div>
<div class="t" style="left:842px;top:507.5px;height:18px;line-height:18px;font-size:12px;color:#74747c;">0.00</div>
<div class="t" style="left:937px;top:507.5px;height:18px;line-height:18px;font-size:12px;color:#74747c;">0.00</div>
<div class="t" style="left:322px;top:525.5px;height:18px;line-height:18px;font-size:12px;color:#74747c;">2021.06</div>
<div class="t" style="left:418px;top:525.5px;height:18px;line-height:18px;font-size:12px;color:#74747c;">0</div>
<div class="t" style="left:488px;top:525.5px;height:18px;line-height:18px;font-size:12px;color:#74747c;">0.00</div>
<div class="t" style="left:564px;top:525.5px;height:18px;line-height:18px;font-size:12px;color:#74747c;">0.00</div>
<div class="t" style="left:650px;top:525.5px;height:18px;line-height:18px;font-size:12px;color:#74747c;">0.00%</div>
<div class="t" style="left:737px;top:525.5px;height:18px;line-height:18px;font-size:12px;color:#74747c;">0.00%</div>
<div class="t" style="left:842px;top:525.5px;height:18px;line-height:18px;font-size:12px;color:#74747c;">0.00</div>
<div class="t" style="left:937px;top:525.5px;height:18px;line-height:18px;font-size:12px;color:#74747c;">0.00</div>
<div class="t" style="left:322px;top:543.5px;height:18px;line-height:18px;font-size:12px;color:#74747c;">2021.05</div>
<div class="t" style="left:418px;top:543.5px;height:18px;line-height:18px;font-size:12px;color:#74747c;">0</div>
<div class="t" style="left:488px;top:543.5px;height:18px;line-height:18px;font-size:12px;color:#74747c;">0.00</div>
<div class="t" style="left:564px;top:543.5px;height:18px;line-height:18px;font-size:12px;color:#74747c;">0.00</div>
<div class="t" style="left:650px;top:543.5px;height:18px;line-height:18px;font-size:12px;color:#74747c;">0.00%</div>
<div class="t" style="left:737px;top:543.5px;height:18px;line-height:18px;font-size:12px;color:#74747c;">0.00%</div>
<div class="t" style="left:842px;top:543.5px;height:18px;line-height:18px;font-size:12px;color:#74747c;">0.00</div>
<div class="t" style="left:937px;top:543.5px;height:18px;line-height:18px;font-size:12px;color:#74747c;">0.00</div>
<div class="t" style="left:322px;top:561.5px;height:18px;line-height:18px;font-size:12px;color:#74747c;">2021.04</div>
<div class="t" style="left:418px;top:561.5px;height:18px;line-height:18px;font-size:12px;color:#74747c;">0</div>
<div class="t" style="left:488px;top:561.5px;height:18px;line-height:18px;font-size:12px;color:#74747c;">0.00</div>
<div class="t" style="left:564px;top:561.5px;height:18px;line-height:18px;font-size:12px;color:#74747c;">0.00</div>
<div class="t" style="left:650px;top:561.5px;height:18px;line-height:18px;font-size:12px;color:#74747c;">0.00%</div>
<div class="t" style="left:737px;top:561.5px;height:18px;line-height:18px;font-size:12px;color:#74747c;">0.00%</div>
<div class="t" style="left:842px;top:561.5px;height:18px;line-height:18px;font-size:12px;color:#74747c;">0.00</div>
<div class="t" style="left:937px;top:561.5px;height:18px;line-height:18px;font-size:12px;color:#74747c;">0.00</div>
<div class="t" style="left:322px;top:579.5px;height:18px;line-height:18px;font-size:12px;color:#74747c;">2021.03</div>
<div class="t" style="left:418px;top:579.5px;height:18px;line-height:18px;font-size:12px;color:#74747c;">0</div>
<div class="t" style="left:488px;top:579.5px;height:18px;line-height:18px;font-size:12px;color:#74747c;">0.00</div>
<div class="t" style="left:564px;top:579.5px;height:18px;line-height:18px;font-size:12px;color:#74747c;">0.00</div>
<div class="t" style="left:650px;top:579.5px;height:18px;line-height:18px;font-size:12px;color:#74747c;">0.00%</div>
<div class="t" style="left:737px;top:579.5px;height:18px;line-height:18px;font-size:12px;color:#74747c;">0.00%</div>
<div class="t" style="left:842px;top:579.5px;height:18px;line-height:18px;font-size:12px;color:#74747c;">0.00</div>
<div class="t" style="left:937px;top:579.5px;height:18px;line-height:18px;font-size:12px;color:#74747c;">0.00</div>
<div class="t" style="left:332px;top:608.5px;height:18px;line-height:18px;font-size:12.5px;color:#e65a32;">22月汇总</div>
<div class="t" style="left:418px;top:608.5px;height:18px;line-height:18px;font-size:12.5px;color:#e65a32;">267</div>
<div class="t" style="left:488px;top:608.5px;height:18px;line-height:18px;font-size:12.5px;color:#e65a32;">7.46</div>
<div class="t" style="left:564px;top:608.5px;height:18px;line-height:18px;font-size:12.5px;color:#e65a32;">854.11</div>
<div class="t" style="left:650px;top:608.5px;height:18px;line-height:18px;font-size:12.5px;color:#e65a32;">15.78%</div>
<div class="t" style="left:737px;top:608.5px;height:18px;line-height:18px;font-size:12.5px;color:#e65a32;">-0.01%</div>
<div class="t" style="left:842px;top:608.5px;height:18px;line-height:18px;font-size:12.5px;color:#e65a32;">-0.82</div>
<div class="t" style="left:937px;top:608.5px;height:18px;line-height:18px;font-size:12.5px;color:#e65a32;">8886.55</div>
<div class="b" style="left:298px;top:677px;width:1622px;height:22px;background:#f0f0f0"></div>
<div class="b" style="left:298px;top:679px;width:1622px;height:1px;background:#222"></div>
<div class="b" style="left:298px;top:679px;width:1px;height:19px;background:#888"></div>
<div class="t" style="left:313px;top:680.0px;height:18px;line-height:18px;font-size:12px;color:#666;">EURUSD,M1</div>
<div class="b" style="left:395px;top:679px;width:89px;height:19px;background:#fff;border:1.5px solid #111;border-top:none"></div>
<div class="t" style="left:405px;top:680.0px;height:18px;line-height:18px;font-size:12px;color:#000;">USDCHF,H1</div>
<div class="t" style="left:495px;top:680.0px;height:18px;line-height:18px;font-size:12px;color:#666;">EURUSD,H1</div>
<div class="b" style="left:575px;top:682px;width:1px;height:14px;background:#555"></div>
<svg class="b" style="left:1887px;top:685px" width="5" height="8" viewBox="0 0 5 8"><path d="M5 0v8L0 4z" fill="#b4b4b4"/></svg>
<svg class="b" style="left:1906px;top:685px" width="5" height="8" viewBox="0 0 5 8"><path d="M0 0v8l5-4z" fill="#b4b4b4"/></svg>
<div class="b" style="left:0px;top:698px;width:1920px;height:1px;background:#a0a0a0"></div>
<div class="b" style="left:0px;top:699px;width:1920px;height:296px;background:#f0f0f0"></div>
<div class="b" style="left:0px;top:716px;width:16px;height:279px;background:linear-gradient(to right,#e2ecf6,#c8d9ea 50%,#bccde0)"></div>
<svg class="b" style="left:3px;top:705px" width="9" height="9" viewBox="0 0 9 9"><path d="M1.5 1.5l6 6M7.5 1.5l-6 6" stroke="#111" stroke-width="1.8"/></svg>
<div class="t" style="left:-4px;top:972px;width:24px;height:14px;font-size:11px;line-height:14px;color:#111;text-align:center;transform:rotate(-90deg)">终端</div>
<div class="b" style="left:16px;top:703px;width:1902px;height:263px;background:#fff;border-top:1px solid #a0a0a0;border-left:1px solid #a0a0a0"></div>
<div class="b" style="left:182px;top:704px;width:1px;height:234px;background:#e0e0e0"></div>
<div class="b" style="left:465px;top:704px;width:1px;height:234px;background:#e0e0e0"></div>
<div class="b" style="left:593px;top:704px;width:1px;height:234px;background:#e0e0e0"></div>
<div class="b" style="left:696px;top:704px;width:1px;height:234px;background:#e0e0e0"></div>
<div class="b" style="left:824px;top:704px;width:1px;height:234px;background:#e0e0e0"></div>
<div class="b" style="left:952px;top:704px;width:1px;height:234px;background:#e0e0e0"></div>
<div class="b" style="left:1080px;top:704px;width:1px;height:234px;background:#e0e0e0"></div>
<div class="b" style="left:1209px;top:704px;width:1px;height:234px;background:#e0e0e0"></div>
<div class="b" style="left:1491px;top:704px;width:1px;height:234px;background:#e0e0e0"></div>
<div class="b" style="left:1619px;top:704px;width:1px;height:234px;background:#e0e0e0"></div>
<div class="b" style="left:1747px;top:704px;width:1px;height:234px;background:#e0e0e0"></div>
<div class="b" style="left:1898px;top:704px;width:1px;height:234px;background:#e0e0e0"></div>
<div class="t" style="left:22px;top:706.5px;height:18px;line-height:18px;font-size:12px;color:#000;">订单</div>
<div class="t" style="left:40px;width:400px;text-align:right;top:706.5px;height:18px;line-height:18px;font-size:12px;color:#000;">时间</div>
<div class="t" style="left:187px;width:400px;text-align:right;top:706.5px;height:18px;line-height:18px;font-size:12px;color:#000;">类型</div>
<div class="t" style="left:291px;width:400px;text-align:right;top:706.5px;height:18px;line-height:18px;font-size:12px;color:#000;">手数</div>
<div class="t" style="left:419px;width:400px;text-align:right;top:706.5px;height:18px;line-height:18px;font-size:12px;color:#000;">交易品种</div>
<div class="t" style="left:547px;width:400px;text-align:right;top:706.5px;height:18px;line-height:18px;font-size:12px;color:#000;">价格</div>
<div class="t" style="left:675px;width:400px;text-align:right;top:706.5px;height:18px;line-height:18px;font-size:12px;color:#000;">止损</div>
<div class="t" style="left:804px;width:400px;text-align:right;top:706.5px;height:18px;line-height:18px;font-size:12px;color:#000;">止盈</div>
<div class="t" style="left:1085px;width:400px;text-align:right;top:706.5px;height:18px;line-height:18px;font-size:12px;color:#000;">时间</div>
<div class="t" style="left:1213px;width:400px;text-align:right;top:706.5px;height:18px;line-height:18px;font-size:12px;color:#000;">价格</div>
<div class="t" style="left:1342px;width:400px;text-align:right;top:706.5px;height:18px;line-height:18px;font-size:12px;color:#000;">库存费</div>
<div class="t" style="left:1492px;width:400px;text-align:right;top:706.5px;height:18px;line-height:18px;font-size:12px;color:#000;">获利</div>
<svg class="b" style="left:450px;top:711px" width="6" height="9" viewBox="0 0 6 9"><path d="M1 8L5 1" stroke="#999"/></svg>
<div class="b" style="left:17px;top:728px;width:1881px;height:21px;background:#e9e9e9"></div>
<div class="b" style="left:17px;top:728px;width:1881px;height:1px;background:#cacaca"></div>
<div class="b" style="left:182px;top:728px;width:1px;height:21px;background:#d8d8d8"></div>
<div class="b" style="left:465px;top:728px;width:1px;height:21px;background:#d8d8d8"></div>
<div class="b" style="left:593px;top:728px;width:1px;height:21px;background:#d8d8d8"></div>
<div class="b" style="left:696px;top:728px;width:1px;height:21px;background:#d8d8d8"></div>
<div class="b" style="left:824px;top:728px;width:1px;height:21px;background:#d8d8d8"></div>
<div class="b" style="left:952px;top:728px;width:1px;height:21px;background:#d8d8d8"></div>
<div class="b" style="left:1080px;top:728px;width:1px;height:21px;background:#d8d8d8"></div>
<div class="b" style="left:1209px;top:728px;width:1px;height:21px;background:#d8d8d8"></div>
<div class="b" style="left:1491px;top:728px;width:1px;height:21px;background:#d8d8d8"></div>
<div class="b" style="left:1619px;top:728px;width:1px;height:21px;background:#d8d8d8"></div>
<div class="b" style="left:1747px;top:728px;width:1px;height:21px;background:#d8d8d8"></div>
<div class="b" style="left:1898px;top:728px;width:1px;height:21px;background:#d8d8d8"></div>
<svg class="b" style="left:19px;top:731px" width="15" height="17" viewBox="0 0 15 17"><path d="M1.5 1.5h7l3 3v11h-10z" fill="#fafafa" stroke="#555"/><path d="M8.5 1.5v3h3" fill="none" stroke="#555"/><circle cx="10.5" cy="13" r="3.5" fill="#e05a28" stroke="#a03a18" stroke-width="0.6"/></svg>
<div class="t" style="left:38px;top:729.5px;height:18px;line-height:18px;font-size:12.4px;color:#111;">98750582</div>
<div class="t" style="left:62px;width:400px;text-align:right;top:729.5px;height:18px;line-height:18px;font-size:12.4px;color:#111;">2022.12.09 17:39:50</div>
<div class="t" style="left:190px;width:400px;text-align:right;top:729.5px;height:18px;line-height:18px;font-size:12.4px;color:#111;">sell</div>
<div class="t" style="left:293px;width:400px;text-align:right;top:729.5px;height:18px;line-height:18px;font-size:12.4px;color:#111;">0.02</div>
<div class="t" style="left:421px;width:400px;text-align:right;top:729.5px;height:18px;line-height:18px;font-size:12.4px;color:#111;">gbpusd</div>
<div class="t" style="left:549px;width:400px;text-align:right;top:729.5px;height:18px;line-height:18px;font-size:12.4px;color:#111;">1.22956</div>
<div class="t" style="left:677px;width:400px;text-align:right;top:729.5px;height:18px;line-height:18px;font-size:12.4px;color:#111;">0.00000</div>
<div class="t" style="left:805px;width:400px;text-align:right;top:729.5px;height:18px;line-height:18px;font-size:12.4px;color:#111;">0.00000</div>
<div class="t" style="left:1088px;width:400px;text-align:right;top:729.5px;height:18px;line-height:18px;font-size:12.4px;color:#111;">2022.12.09 19:44:08</div>
<div class="t" style="left:1216px;width:400px;text-align:right;top:729.5px;height:18px;line-height:18px;font-size:12.4px;color:#111;">1.22798</div>
<div class="t" style="left:1344px;width:400px;text-align:right;top:729.5px;height:18px;line-height:18px;font-size:12.4px;color:#111;">0.00</div>
<div class="t" style="left:1494px;width:400px;text-align:right;top:729.5px;height:18px;line-height:18px;font-size:12.4px;color:#111;">3.16</div>
<div class="b" style="left:17px;top:749px;width:1881px;height:1px;background:#cacaca"></div>
<div class="b" style="left:182px;top:749px;width:1px;height:21px;background:#d8d8d8"></div>
<div class="b" style="left:465px;top:749px;width:1px;height:21px;background:#d8d8d8"></div>
<div class="b" style="left:593px;top:749px;width:1px;height:21px;background:#d8d8d8"></div>
<div class="b" style="left:696px;top:749px;width:1px;height:21px;background:#d8d8d8"></div>
<div class="b" style="left:824px;top:749px;width:1px;height:21px;background:#d8d8d8"></div>
<div class="b" style="left:952px;top:749px;width:1px;height:21px;background:#d8d8d8"></div>
<div class="b" style="left:1080px;top:749px;width:1px;height:21px;background:#d8d8d8"></div>
<div class="b" style="left:1209px;top:749px;width:1px;height:21px;background:#d8d8d8"></div>
<div class="b" style="left:1491px;top:749px;width:1px;height:21px;background:#d8d8d8"></div>
<div class="b" style="left:1619px;top:749px;width:1px;height:21px;background:#d8d8d8"></div>
<div class="b" style="left:1747px;top:749px;width:1px;height:21px;background:#d8d8d8"></div>
<div class="b" style="left:1898px;top:749px;width:1px;height:21px;background:#d8d8d8"></div>
<svg class="b" style="left:19px;top:752px" width="15" height="17" viewBox="0 0 15 17"><path d="M1.5 1.5h7l3 3v11h-10z" fill="#fafafa" stroke="#555"/><path d="M8.5 1.5v3h3" fill="none" stroke="#555"/><circle cx="10.5" cy="13" r="3.5" fill="#e05a28" stroke="#a03a18" stroke-width="0.6"/></svg>
<div class="t" style="left:38px;top:750.5px;height:18px;line-height:18px;font-size:12.4px;color:#111;">98750974</div>
<div class="t" style="left:62px;width:400px;text-align:right;top:750.5px;height:18px;line-height:18px;font-size:12.4px;color:#111;">2022.12.09 17:57:09</div>
<div class="t" style="left:190px;width:400px;text-align:right;top:750.5px;height:18px;line-height:18px;font-size:12.4px;color:#111;">sell</div>
<div class="t" style="left:293px;width:400px;text-align:right;top:750.5px;height:18px;line-height:18px;font-size:12.4px;color:#111;">0.02</div>
<div class="t" style="left:421px;width:400px;text-align:right;top:750.5px;height:18px;line-height:18px;font-size:12.4px;color:#111;">audcad</div>
<div class="t" style="left:549px;width:400px;text-align:right;top:750.5px;height:18px;line-height:18px;font-size:12.4px;color:#111;">0.92632</div>
<div class="t" style="left:677px;width:400px;text-align:right;top:750.5px;height:18px;line-height:18px;font-size:12.4px;color:#111;">0.00000</div>
<div class="t" style="left:805px;width:400px;text-align:right;top:750.5px;height:18px;line-height:18px;font-size:12.4px;color:#111;">0.00000</div>
<div class="t" style="left:1088px;width:400px;text-align:right;top:750.5px;height:18px;line-height:18px;font-size:12.4px;color:#111;">2022.12.12 02:36:25</div>
<div class="t" style="left:1216px;width:400px;text-align:right;top:750.5px;height:18px;line-height:18px;font-size:12.4px;color:#111;">0.92470</div>
<div class="t" style="left:1344px;width:400px;text-align:right;top:750.5px;height:18px;line-height:18px;font-size:12.4px;color:#111;">0.02</div>
<div class="t" style="left:1494px;width:400px;text-align:right;top:750.5px;height:18px;line-height:18px;font-size:12.4px;color:#111;">2.37</div>
<div class="b" style="left:17px;top:770px;width:1881px;height:21px;background:#e9e9e9"></div>
<div class="b" style="left:17px;top:770px;width:1881px;height:1px;background:#cacaca"></div>
<div class="b" style="left:182px;top:770px;width:1px;height:21px;background:#d8d8d8"></div>
<div class="b" style="left:465px;top:770px;width:1px;height:21px;background:#d8d8d8"></div>
<div class="b" style="left:593px;top:770px;width:1px;height:21px;background:#d8d8d8"></div>
<div class="b" style="left:696px;top:770px;width:1px;height:21px;background:#d8d8d8"></div>
<div class="b" style="left:824px;top:770px;width:1px;height:21px;background:#d8d8d8"></div>
<div class="b" style="left:952px;top:770px;width:1px;height:21px;background:#d8d8d8"></div>
<div class="b" style="left:1080px;top:770px;width:1px;height:21px;background:#d8d8d8"></div>
<div class="b" style="left:1209px;top:770px;width:1px;height:21px;background:#d8d8d8"></div>
<div class="b" style="left:1491px;top:770px;width:1px;height:21px;background:#d8d8d8"></div>
<div class="b" style="left:1619px;top:770px;width:1px;height:21px;background:#d8d8d8"></div>
<div class="b" style="left:1747px;top:770px;width:1px;height:21px;background:#d8d8d8"></div>
<div class="b" style="left:1898px;top:770px;width:1px;height:21px;background:#d8d8d8"></div>
<svg class="b" style="left:19px;top:773px" width="15" height="17" viewBox="0 0 15 17"><path d="M1.5 1.5h7l3 3v11h-10z" fill="#fafafa" stroke="#555"/><path d="M8.5 1.5v3h3" fill="none" stroke="#555"/><circle cx="10.5" cy="13" r="3.5" fill="#e05a28" stroke="#a03a18" stroke-width="0.6"/></svg>
<div class="t" style="left:38px;top:771.5px;height:18px;line-height:18px;font-size:12.4px;color:#111;">98753553</div>
<div class="t" style="left:62px;width:400px;text-align:right;top:771.5px;height:18px;line-height:18px;font-size:12.4px;color:#111;">2022.12.09 18:48:10</div>
<div class="t" style="left:190px;width:400px;text-align:right;top:771.5px;height:18px;line-height:18px;font-size:12.4px;color:#111;">sell</div>
<div class="t" style="left:293px;width:400px;text-align:right;top:771.5px;height:18px;line-height:18px;font-size:12.4px;color:#111;">0.02</div>
<div class="t" style="left:421px;width:400px;text-align:right;top:771.5px;height:18px;line-height:18px;font-size:12.4px;color:#111;">audusd</div>
<div class="t" style="left:549px;width:400px;text-align:right;top:771.5px;height:18px;line-height:18px;font-size:12.4px;color:#111;">0.68104</div>
<div class="t" style="left:677px;width:400px;text-align:right;top:771.5px;height:18px;line-height:18px;font-size:12.4px;color:#111;">0.00000</div>
<div class="t" style="left:805px;width:400px;text-align:right;top:771.5px;height:18px;line-height:18px;font-size:12.4px;color:#111;">0.00000</div>
<div class="t" style="left:1088px;width:400px;text-align:right;top:771.5px;height:18px;line-height:18px;font-size:12.4px;color:#111;">2022.12.09 22:51:19</div>
<div class="t" style="left:1216px;width:400px;text-align:right;top:771.5px;height:18px;line-height:18px;font-size:12.4px;color:#111;">0.67946</div>
<div class="t" style="left:1344px;width:400px;text-align:right;top:771.5px;height:18px;line-height:18px;font-size:12.4px;color:#111;">0.00</div>
<div class="t" style="left:1494px;width:400px;text-align:right;top:771.5px;height:18px;line-height:18px;font-size:12.4px;color:#111;">3.16</div>
<div class="b" style="left:17px;top:791px;width:1881px;height:1px;background:#cacaca"></div>
<div class="b" style="left:182px;top:791px;width:1px;height:21px;background:#d8d8d8"></div>
<div class="b" style="left:465px;top:791px;width:1px;height:21px;background:#d8d8d8"></div>
<div class="b" style="left:593px;top:791px;width:1px;height:21px;background:#d8d8d8"></div>
<div class="b" style="left:696px;top:791px;width:1px;height:21px;background:#d8d8d8"></div>
<div class="b" style="left:824px;top:791px;width:1px;height:21px;background:#d8d8d8"></div>
<div class="b" style="left:952px;top:791px;width:1px;height:21px;background:#d8d8d8"></div>
<div class="b" style="left:1080px;top:791px;width:1px;height:21px;background:#d8d8d8"></div>
<div class="b" style="left:1209px;top:791px;width:1px;height:21px;background:#d8d8d8"></div>
<div class="b" style="left:1491px;top:791px;width:1px;height:21px;background:#d8d8d8"></div>
<div class="b" style="left:1619px;top:791px;width:1px;height:21px;background:#d8d8d8"></div>
<div class="b" style="left:1747px;top:791px;width:1px;height:21px;background:#d8d8d8"></div>
<div class="b" style="left:1898px;top:791px;width:1px;height:21px;background:#d8d8d8"></div>
<svg class="b" style="left:19px;top:794px" width="15" height="17" viewBox="0 0 15 17"><path d="M1.5 1.5h7l3 3v11h-10z" fill="#fafafa" stroke="#555"/><path d="M8.5 1.5v3h3" fill="none" stroke="#555"/><circle cx="10.5" cy="13" r="3.5" fill="#3a8ad8" stroke="#a03a18" stroke-width="0.6"/></svg>
<div class="t" style="left:38px;top:792.5px;height:18px;line-height:18px;font-size:12.4px;color:#111;">98754366</div>
<div class="t" style="left:62px;width:400px;text-align:right;top:792.5px;height:18px;line-height:18px;font-size:12.4px;color:#111;">2022.12.09 19:21:30</div>
<div class="t" style="left:190px;width:400px;text-align:right;top:792.5px;height:18px;line-height:18px;font-size:12.4px;color:#111;">buy</div>
<div class="t" style="left:293px;width:400px;text-align:right;top:792.5px;height:18px;line-height:18px;font-size:12.4px;color:#111;">0.03</div>
<div class="t" style="left:421px;width:400px;text-align:right;top:792.5px;height:18px;line-height:18px;font-size:12.4px;color:#111;">euraud</div>
<div class="t" style="left:549px;width:400px;text-align:right;top:792.5px;height:18px;line-height:18px;font-size:12.4px;color:#111;">1.54874</div>
<div class="t" style="left:677px;width:400px;text-align:right;top:792.5px;height:18px;line-height:18px;font-size:12.4px;color:#111;">0.00000</div>
<div class="t" style="left:805px;width:400px;text-align:right;top:792.5px;height:18px;line-height:18px;font-size:12.4px;color:#111;">0.00000</div>
<div class="t" style="left:1088px;width:400px;text-align:right;top:792.5px;height:18px;line-height:18px;font-size:12.4px;color:#111;">2022.12.12 01:59:55</div>
<div class="t" style="left:1216px;width:400px;text-align:right;top:792.5px;height:18px;line-height:18px;font-size:12.4px;color:#111;">1.55200</div>
<div class="t" style="left:1344px;width:400px;text-align:right;top:792.5px;height:18px;line-height:18px;font-size:12.4px;color:#111;">-0.13</div>
<div class="t" style="left:1494px;width:400px;text-align:right;top:792.5px;height:18px;line-height:18px;font-size:12.4px;color:#111;">6.63</div>
<div class="b" style="left:17px;top:812px;width:1881px;height:21px;background:#e9e9e9"></div>
<div class="b" style="left:17px;top:812px;width:1881px;height:1px;background:#cacaca"></div>
<div class="b" style="left:182px;top:812px;width:1px;height:21px;background:#d8d8d8"></div>
<div class="b" style="left:465px;top:812px;width:1px;height:21px;background:#d8d8d8"></div>
<div class="b" style="left:593px;top:812px;width:1px;height:21px;background:#d8d8d8"></div>
<div class="b" style="left:696px;top:812px;width:1px;height:21px;background:#d8d8d8"></div>
<div class="b" style="left:824px;top:812px;width:1px;height:21px;background:#d8d8d8"></div>
<div class="b" style="left:952px;top:812px;width:1px;height:21px;background:#d8d8d8"></div>
<div class="b" style="left:1080px;top:812px;width:1px;height:21px;background:#d8d8d8"></div>
<div class="b" style="left:1209px;top:812px;width:1px;height:21px;background:#d8d8d8"></div>
<div class="b" style="left:1491px;top:812px;width:1px;height:21px;background:#d8d8d8"></div>
<div class="b" style="left:1619px;top:812px;width:1px;height:21px;background:#d8d8d8"></div>
<div class="b" style="left:1747px;top:812px;width:1px;height:21px;background:#d8d8d8"></div>
<div class="b" style="left:1898px;top:812px;width:1px;height:21px;background:#d8d8d8"></div>
<svg class="b" style="left:19px;top:815px" width="15" height="17" viewBox="0 0 15 17"><path d="M1.5 1.5h7l3 3v11h-10z" fill="#fafafa" stroke="#555"/><path d="M8.5 1.5v3h3" fill="none" stroke="#555"/><circle cx="10.5" cy="13" r="3.5" fill="#3a8ad8" stroke="#a03a18" stroke-width="0.6"/></svg>
<div class="t" style="left:38px;top:813.5px;height:18px;line-height:18px;font-size:12.4px;color:#111;">98755775</div>
<div class="t" style="left:62px;width:400px;text-align:right;top:813.5px;height:18px;line-height:18px;font-size:12.4px;color:#111;">2022.12.09 20:58:49</div>
<div class="t" style="left:190px;width:400px;text-align:right;top:813.5px;height:18px;line-height:18px;font-size:12.4px;color:#111;">buy</div>
<div class="t" style="left:293px;width:400px;text-align:right;top:813.5px;height:18px;line-height:18px;font-size:12.4px;color:#111;">0.02</div>
<div class="t" style="left:421px;width:400px;text-align:right;top:813.5px;height:18px;line-height:18px;font-size:12.4px;color:#111;">gbpnzd</div>
<div class="t" style="left:549px;width:400px;text-align:right;top:813.5px;height:18px;line-height:18px;font-size:12.4px;color:#111;">1.91182</div>
<div class="t" style="left:677px;width:400px;text-align:right;top:813.5px;height:18px;line-height:18px;font-size:12.4px;color:#111;">0.00000</div>
<div class="t" style="left:805px;width:400px;text-align:right;top:813.5px;height:18px;line-height:18px;font-size:12.4px;color:#111;">0.00000</div>
<div class="t" style="left:1088px;width:400px;text-align:right;top:813.5px;height:18px;line-height:18px;font-size:12.4px;color:#111;">2022.12.12 01:41:39</div>
<div class="t" style="left:1216px;width:400px;text-align:right;top:813.5px;height:18px;line-height:18px;font-size:12.4px;color:#111;">1.91356</div>
<div class="t" style="left:1344px;width:400px;text-align:right;top:813.5px;height:18px;line-height:18px;font-size:12.4px;color:#111;">-0.11</div>
<div class="t" style="left:1494px;width:400px;text-align:right;top:813.5px;height:18px;line-height:18px;font-size:12.4px;color:#111;">2.23</div>
<div class="b" style="left:17px;top:833px;width:1881px;height:1px;background:#cacaca"></div>
<div class="b" style="left:182px;top:833px;width:1px;height:21px;background:#d8d8d8"></div>
<div class="b" style="left:465px;top:833px;width:1px;height:21px;background:#d8d8d8"></div>
<div class="b" style="left:593px;top:833px;width:1px;height:21px;background:#d8d8d8"></div>
<div class="b" style="left:696px;top:833px;width:1px;height:21px;background:#d8d8d8"></div>
<div class="b" style="left:824px;top:833px;width:1px;height:21px;background:#d8d8d8"></div>
<div class="b" style="left:952px;top:833px;width:1px;height:21px;background:#d8d8d8"></div>
<div class="b" style="left:1080px;top:833px;width:1px;height:21px;background:#d8d8d8"></div>
<div class="b" style="left:1209px;top:833px;width:1px;height:21px;background:#d8d8d8"></div>
<div class="b" style="left:1491px;top:833px;width:1px;height:21px;background:#d8d8d8"></div>
<div class="b" style="left:1619px;top:833px;width:1px;height:21px;background:#d8d8d8"></div>
<div class="b" style="left:1747px;top:833px;width:1px;height:21px;background:#d8d8d8"></div>
<div class="b" style="left:1898px;top:833px;width:1px;height:21px;background:#d8d8d8"></div>
<svg class="b" style="left:19px;top:836px" width="15" height="17" viewBox="0 0 15 17"><path d="M1.5 1.5h7l3 3v11h-10z" fill="#fafafa" stroke="#555"/><path d="M8.5 1.5v3h3" fill="none" stroke="#555"/><circle cx="10.5" cy="13" r="3.5" fill="#e05a28" stroke="#a03a18" stroke-width="0.6"/></svg>
<div class="t" style="left:38px;top:834.5px;height:18px;line-height:18px;font-size:12.4px;color:#111;">98778965</div>
<div class="t" style="left:62px;width:400px;text-align:right;top:834.5px;height:18px;line-height:18px;font-size:12.4px;color:#111;">2022.12.12 11:46:45</div>
<div class="t" style="left:190px;width:400px;text-align:right;top:834.5px;height:18px;line-height:18px;font-size:12.4px;color:#111;">sell</div>
<div class="t" style="left:293px;width:400px;text-align:right;top:834.5px;height:18px;line-height:18px;font-size:12.4px;color:#111;">0.02</div>
<div class="t" style="left:421px;width:400px;text-align:right;top:834.5px;height:18px;line-height:18px;font-size:12.4px;color:#111;">eurcad</div>
<div class="t" style="left:549px;width:400px;text-align:right;top:834.5px;height:18px;line-height:18px;font-size:12.4px;color:#111;">1.44312</div>
<div class="t" style="left:677px;width:400px;text-align:right;top:834.5px;height:18px;line-height:18px;font-size:12.4px;color:#111;">0.00000</div>
<div class="t" style="left:805px;width:400px;text-align:right;top:834.5px;height:18px;line-height:18px;font-size:12.4px;color:#111;">0.00000</div>
<div class="t" style="left:1088px;width:400px;text-align:right;top:834.5px;height:18px;line-height:18px;font-size:12.4px;color:#111;">2022.12.12 14:59:25</div>
<div class="t" style="left:1216px;width:400px;text-align:right;top:834.5px;height:18px;line-height:18px;font-size:12.4px;color:#111;">1.44142</div>
<div class="t" style="left:1344px;width:400px;text-align:right;top:834.5px;height:18px;line-height:18px;font-size:12.4px;color:#111;">0.00</div>
<div class="t" style="left:1494px;width:400px;text-align:right;top:834.5px;height:18px;line-height:18px;font-size:12.4px;color:#111;">2.49</div>
<div class="b" style="left:17px;top:854px;width:1881px;height:21px;background:#e9e9e9"></div>
<div class="b" style="left:17px;top:854px;width:1881px;height:1px;background:#cacaca"></div>
<div class="b" style="left:182px;top:854px;width:1px;height:21px;background:#d8d8d8"></div>
<div class="b" style="left:465px;top:854px;width:1px;height:21px;background:#d8d8d8"></div>
<div class="b" style="left:593px;top:854px;width:1px;height:21px;background:#d8d8d8"></div>
<div class="b" style="left:696px;top:854px;width:1px;height:21px;background:#d8d8d8"></div>
<div class="b" style="left:824px;top:854px;width:1px;height:21px;background:#d8d8d8"></div>
<div class="b" style="left:952px;top:854px;width:1px;height:21px;background:#d8d8d8"></div>
<div class="b" style="left:1080px;top:854px;width:1px;height:21px;background:#d8d8d8"></div>
<div class="b" style="left:1209px;top:854px;width:1px;height:21px;background:#d8d8d8"></div>
<div class="b" style="left:1491px;top:854px;width:1px;height:21px;background:#d8d8d8"></div>
<div class="b" style="left:1619px;top:854px;width:1px;height:21px;background:#d8d8d8"></div>
<div class="b" style="left:1747px;top:854px;width:1px;height:21px;background:#d8d8d8"></div>
<div class="b" style="left:1898px;top:854px;width:1px;height:21px;background:#d8d8d8"></div>
<svg class="b" style="left:19px;top:857px" width="15" height="17" viewBox="0 0 15 17"><path d="M1.5 1.5h7l3 3v11h-10z" fill="#fafafa" stroke="#555"/><path d="M8.5 1.5v3h3" fill="none" stroke="#555"/><circle cx="10.5" cy="13" r="3.5" fill="#e05a28" stroke="#a03a18" stroke-width="0.6"/></svg>
<div class="t" style="left:38px;top:855.5px;height:18px;line-height:18px;font-size:12.4px;color:#111;">98786419</div>
<div class="t" style="left:62px;width:400px;text-align:right;top:855.5px;height:18px;line-height:18px;font-size:12.4px;color:#111;">2022.12.12 15:31:59</div>
<div class="t" style="left:190px;width:400px;text-align:right;top:855.5px;height:18px;line-height:18px;font-size:12.4px;color:#111;">sell</div>
<div class="t" style="left:293px;width:400px;text-align:right;top:855.5px;height:18px;line-height:18px;font-size:12.4px;color:#111;">0.02</div>
<div class="t" style="left:421px;width:400px;text-align:right;top:855.5px;height:18px;line-height:18px;font-size:12.4px;color:#111;">eurcad</div>
<div class="t" style="left:549px;width:400px;text-align:right;top:855.5px;height:18px;line-height:18px;font-size:12.4px;color:#111;">1.44375</div>
<div class="t" style="left:677px;width:400px;text-align:right;top:855.5px;height:18px;line-height:18px;font-size:12.4px;color:#111;">0.00000</div>
<div class="t" style="left:805px;width:400px;text-align:right;top:855.5px;height:18px;line-height:18px;font-size:12.4px;color:#111;">0.00000</div>
<div class="t" style="left:1088px;width:400px;text-align:right;top:855.5px;height:18px;line-height:18px;font-size:12.4px;color:#111;">2022.12.12 17:04:35</div>
<div class="t" style="left:1216px;width:400px;text-align:right;top:855.5px;height:18px;line-height:18px;font-size:12.4px;color:#111;">1.44214</div>
<div class="t" style="left:1344px;width:400px;text-align:right;top:855.5px;height:18px;line-height:18px;font-size:12.4px;color:#111;">0.00</div>
<div class="t" style="left:1494px;width:400px;text-align:right;top:855.5px;height:18px;line-height:18px;font-size:12.4px;color:#111;">2.36</div>
<div class="b" style="left:17px;top:875px;width:1881px;height:1px;background:#cacaca"></div>
<div class="b" style="left:182px;top:875px;width:1px;height:21px;background:#d8d8d8"></div>
<div class="b" style="left:465px;top:875px;width:1px;height:21px;background:#d8d8d8"></div>
<div class="b" style="left:593px;top:875px;width:1px;height:21px;background:#d8d8d8"></div>
<div class="b" style="left:696px;top:875px;width:1px;height:21px;background:#d8d8d8"></div>
<div class="b" style="left:824px;top:875px;width:1px;height:21px;background:#d8d8d8"></div>
<div class="b" style="left:952px;top:875px;width:1px;height:21px;background:#d8d8d8"></div>
<div class="b" style="left:1080px;top:875px;width:1px;height:21px;background:#d8d8d8"></div>
<div class="b" style="left:1209px;top:875px;width:1px;height:21px;background:#d8d8d8"></div>
<div class="b" style="left:1491px;top:875px;width:1px;height:21px;background:#d8d8d8"></div>
<div class="b" style="left:1619px;top:875px;width:1px;height:21px;background:#d8d8d8"></div>
<div class="b" style="left:1747px;top:875px;width:1px;height:21px;background:#d8d8d8"></div>
<div class="b" style="left:1898px;top:875px;width:1px;height:21px;background:#d8d8d8"></div>
<svg class="b" style="left:19px;top:878px" width="15" height="17" viewBox="0 0 15 17"><path d="M1.5 1.5h7l3 3v11h-10z" fill="#fafafa" stroke="#555"/><path d="M8.5 1.5v3h3" fill="none" stroke="#555"/><circle cx="10.5" cy="13" r="3.5" fill="#e05a28" stroke="#a03a18" stroke-width="0.6"/></svg>
<div class="t" style="left:38px;top:876.5px;height:18px;line-height:18px;font-size:12.4px;color:#111;">98792288</div>
<div class="t" style="left:62px;width:400px;text-align:right;top:876.5px;height:18px;line-height:18px;font-size:12.4px;color:#111;">2022.12.12 17:31:23</div>
<div class="t" style="left:190px;width:400px;text-align:right;top:876.5px;height:18px;line-height:18px;font-size:12.4px;color:#111;">sell</div>
<div class="t" style="left:293px;width:400px;text-align:right;top:876.5px;height:18px;line-height:18px;font-size:12.4px;color:#111;">0.02</div>
<div class="t" style="left:421px;width:400px;text-align:right;top:876.5px;height:18px;line-height:18px;font-size:12.4px;color:#111;">gbpnzd</div>
<div class="t" style="left:549px;width:400px;text-align:right;top:876.5px;height:18px;line-height:18px;font-size:12.4px;color:#111;">1.92393</div>
<div class="t" style="left:677px;width:400px;text-align:right;top:876.5px;height:18px;line-height:18px;font-size:12.4px;color:#111;">0.00000</div>
<div class="t" style="left:805px;width:400px;text-align:right;top:876.5px;height:18px;line-height:18px;font-size:12.4px;color:#111;">0.00000</div>
<div class="t" style="left:1088px;width:400px;text-align:right;top:876.5px;height:18px;line-height:18px;font-size:12.4px;color:#111;">2022.12.12 17:55:22</div>
<div class="t" style="left:1216px;width:400px;text-align:right;top:876.5px;height:18px;line-height:18px;font-size:12.4px;color:#111;">1.92224</div>
<div class="t" style="left:1344px;width:400px;text-align:right;top:876.5px;height:18px;line-height:18px;font-size:12.4px;color:#111;">0.00</div>
<div class="t" style="left:1494px;width:400px;text-align:right;top:876.5px;height:18px;line-height:18px;font-size:12.4px;color:#111;">2.16</div>
<div class="b" style="left:17px;top:896px;width:1881px;height:21px;background:#e9e9e9"></div>
<div class="b" style="left:17px;top:896px;width:1881px;height:1px;background:#cacaca"></div>
<div class="b" style="left:182px;top:896px;width:1px;height:21px;background:#d8d8d8"></div>
<div class="b" style="left:465px;top:896px;width:1px;height:21px;background:#d8d8d8"></div>
<div class="b" style="left:593px;top:896px;width:1px;height:21px;background:#d8d8d8"></div>
<div class="b" style="left:696px;top:896px;width:1px;height:21px;background:#d8d8d8"></div>
<div class="b" style="left:824px;top:896px;width:1px;height:21px;background:#d8d8d8"></div>
<div class="b" style="left:952px;top:896px;width:1px;height:21px;background:#d8d8d8"></div>
<div class="b" style="left:1080px;top:896px;width:1px;height:21px;background:#d8d8d8"></div>
<div class="b" style="left:1209px;top:896px;width:1px;height:21px;background:#d8d8d8"></div>
<div class="b" style="left:1491px;top:896px;width:1px;height:21px;background:#d8d8d8"></div>
<div class="b" style="left:1619px;top:896px;width:1px;height:21px;background:#d8d8d8"></div>
<div class="b" style="left:1747px;top:896px;width:1px;height:21px;background:#d8d8d8"></div>
<div class="b" style="left:1898px;top:896px;width:1px;height:21px;background:#d8d8d8"></div>
<svg class="b" style="left:19px;top:899px" width="15" height="17" viewBox="0 0 15 17"><path d="M1.5 1.5h7l3 3v11h-10z" fill="#fafafa" stroke="#555"/><path d="M8.5 1.5v3h3" fill="none" stroke="#555"/><circle cx="10.5" cy="13" r="3.5" fill="#e05a28" stroke="#a03a18" stroke-width="0.6"/></svg>
<div class="t" style="left:38px;top:897.5px;height:18px;line-height:18px;font-size:12.4px;color:#111;">98795222</div>
<div class="t" style="left:62px;width:400px;text-align:right;top:897.5px;height:18px;line-height:18px;font-size:12.4px;color:#111;">2022.12.12 18:18:02</div>
<div class="t" style="left:190px;width:400px;text-align:right;top:897.5px;height:18px;line-height:18px;font-size:12.4px;color:#111;">sell</div>
<div class="t" style="left:293px;width:400px;text-align:right;top:897.5px;height:18px;line-height:18px;font-size:12.4px;color:#111;">0.02</div>
<div class="t" style="left:421px;width:400px;text-align:right;top:897.5px;height:18px;line-height:18px;font-size:12.4px;color:#111;">gbpnzd</div>
<div class="t" style="left:549px;width:400px;text-align:right;top:897.5px;height:18px;line-height:18px;font-size:12.4px;color:#111;">1.92389</div>
<div class="t" style="left:677px;width:400px;text-align:right;top:897.5px;height:18px;line-height:18px;font-size:12.4px;color:#111;">0.00000</div>
<div class="t" style="left:805px;width:400px;text-align:right;top:897.5px;height:18px;line-height:18px;font-size:12.4px;color:#111;">0.00000</div>
<div class="t" style="left:1088px;width:400px;text-align:right;top:897.5px;height:18px;line-height:18px;font-size:12.4px;color:#111;">2022.12.12 20:41:55</div>
<div class="t" style="left:1216px;width:400px;text-align:right;top:897.5px;height:18px;line-height:18px;font-size:12.4px;color:#111;">1.92228</div>
<div class="t" style="left:1344px;width:400px;text-align:right;top:897.5px;height:18px;line-height:18px;font-size:12.4px;color:#111;">0.00</div>
<div class="t" style="left:1494px;width:400px;text-align:right;top:897.5px;height:18px;line-height:18px;font-size:12.4px;color:#111;">2.06</div>
<div class="b" style="left:17px;top:917px;width:1881px;height:1px;background:#cacaca"></div>
<div class="b" style="left:182px;top:917px;width:1px;height:21px;background:#d8d8d8"></div>
<div class="b" style="left:465px;top:917px;width:1px;height:21px;background:#d8d8d8"></div>
<div class="b" style="left:593px;top:917px;width:1px;height:21px;background:#d8d8d8"></div>
<div class="b" style="left:696px;top:917px;width:1px;height:21px;background:#d8d8d8"></div>
<div class="b" style="left:824px;top:917px;width:1px;height:21px;background:#d8d8d8"></div>
<div class="b" style="left:952px;top:917px;width:1px;height:21px;background:#d8d8d8"></div>
<div class="b" style="left:1080px;top:917px;width:1px;height:21px;background:#d8d8d8"></div>
<div class="b" style="left:1209px;top:917px;width:1px;height:21px;background:#d8d8d8"></div>
<div class="b" style="left:1491px;top:917px;width:1px;height:21px;background:#d8d8d8"></div>
<div class="b" style="left:1619px;top:917px;width:1px;height:21px;background:#d8d8d8"></div>
<div class="b" style="left:1747px;top:917px;width:1px;height:21px;background:#d8d8d8"></div>
<div class="b" style="left:1898px;top:917px;width:1px;height:21px;background:#d8d8d8"></div>
<svg class="b" style="left:19px;top:920px" width="15" height="17" viewBox="0 0 15 17"><path d="M1.5 1.5h7l3 3v11h-10z" fill="#fafafa" stroke="#555"/><path d="M8.5 1.5v3h3" fill="none" stroke="#555"/><circle cx="10.5" cy="13" r="3.5" fill="#e05a28" stroke="#a03a18" stroke-width="0.6"/></svg>
<div class="t" style="left:38px;top:918.5px;height:18px;line-height:18px;font-size:12.4px;color:#111;">98795819</div>
<div class="t" style="left:62px;width:400px;text-align:right;top:918.5px;height:18px;line-height:18px;font-size:12.4px;color:#111;">2022.12.12 18:41:28</div>
<div class="t" style="left:190px;width:400px;text-align:right;top:918.5px;height:18px;line-height:18px;font-size:12.4px;color:#111;">sell</div>
<div class="t" style="left:293px;width:400px;text-align:right;top:918.5px;height:18px;line-height:18px;font-size:12.4px;color:#111;">0.02</div>
<div class="t" style="left:421px;width:400px;text-align:right;top:918.5px;height:18px;line-height:18px;font-size:12.4px;color:#111;">euraud</div>
<div class="t" style="left:549px;width:400px;text-align:right;top:918.5px;height:18px;line-height:18px;font-size:12.4px;color:#111;">1.56506</div>
<div class="t" style="left:677px;width:400px;text-align:right;top:918.5px;height:18px;line-height:18px;font-size:12.4px;color:#111;">0.00000</div>
<div class="t" style="left:805px;width:400px;text-align:right;top:918.5px;height:18px;line-height:18px;font-size:12.4px;color:#111;">0.00000</div>
<div class="t" style="left:1088px;width:400px;text-align:right;top:918.5px;height:18px;line-height:18px;font-size:12.4px;color:#111;">2022.12.12 19:17:18</div>
<div class="t" style="left:1216px;width:400px;text-align:right;top:918.5px;height:18px;line-height:18px;font-size:12.4px;color:#111;">1.56344</div>
<div class="t" style="left:1344px;width:400px;text-align:right;top:918.5px;height:18px;line-height:18px;font-size:12.4px;color:#111;">0.00</div>
<div class="t" style="left:1494px;width:400px;text-align:right;top:918.5px;height:18px;line-height:18px;font-size:12.4px;color:#111;">2.19</div>
<div class="b" style="left:17px;top:938px;width:1881px;height:21px;background:#c8c8c8"></div>
<svg class="b" style="left:21px;top:943px" width="10" height="10" viewBox="0 0 10 10"><circle cx="5" cy="5" r="3.8" fill="none" stroke="#888" stroke-width="1.2"/><path d="M5 5l2-2" stroke="#888"/></svg>
<div class="t" style="left:38px;top:939.5px;height:18px;line-height:18px;font-size:12.3px;color:#111;font-weight:bold">盈/亏: 3 573.75  信用额: 0.00  存款: 5 412.80  取款: -100.00</div>
<div class="t" style="left:1494px;width:400px;text-align:right;top:939.5px;height:18px;line-height:18px;font-size:12px;color:#111;font-weight:bold">3 886.55</div>
<div class="b" style="left:1898px;top:704px;width:19px;height:262px;background:#f0f0f0"></div>
<div class="b" style="left:1900px;top:934px;width:15px;height:15px;background:#cdcdcd"></div>
<svg class="b" style="left:1903px;top:710px" width="10" height="7" viewBox="0 0 10 7"><path d="M1 6l4-4 4 4" fill="none" stroke="#555" stroke-width="2"/></svg>
<svg class="b" style="left:1903px;top:956px" width="10" height="7" viewBox="0 0 10 7"><path d="M1 1l4 4 4-4" fill="none" stroke="#555" stroke-width="2"/></svg>
<div class="b" style="left:16px;top:968px;width:1894px;height:1.5px;background:#111"></div>
<div class="b" style="left:107px;top:968px;width:68px;height:22px;background:#fff;border:1.5px solid #111;border-top:none"></div>
<div class="t" style="left:28px;top:969.5px;height:18px;line-height:18px;font-size:12px;color:#666;">交易</div>
<div class="t" style="left:72px;top:969.5px;height:18px;line-height:18px;font-size:12px;color:#666;">展示</div>
<div class="t" style="left:116px;top:969.5px;height:18px;line-height:18px;font-size:12px;color:#000;">账户历史</div>
<div class="t" style="left:184px;top:969.5px;height:18px;line-height:18px;font-size:12px;color:#666;">新闻</div>
<div class="t" style="left:242px;top:969.5px;height:18px;line-height:18px;font-size:12px;color:#666;">警报</div>
<div class="t" style="left:286px;top:969.5px;height:18px;line-height:18px;font-size:12px;color:#666;">邮箱</div>
<div class="t" style="left:330px;top:969.5px;height:18px;line-height:18px;font-size:12px;color:#666;">市场</div>
<div class="t" style="left:394px;top:969.5px;height:18px;line-height:18px;font-size:12px;color:#666;">信号</div>
<div class="t" style="left:437px;top:969.5px;height:18px;line-height:18px;font-size:12px;color:#666;">文章</div>
<div class="t" style="left:490px;top:969.5px;height:18px;line-height:18px;font-size:12px;color:#666;">代码库</div>
<div class="t" style="left:546px;top:969.5px;height:18px;line-height:18px;font-size:12px;color:#666;">EA</div>
<div class="t" style="left:582px;top:969.5px;height:18px;line-height:18px;font-size:12px;color:#666;">日志</div>
<div class="b" style="left:62px;top:972px;width:1px;height:16px;background:#444"></div>
<div class="b" style="left:232px;top:972px;width:1px;height:16px;background:#444"></div>
<div class="b" style="left:276px;top:972px;width:1px;height:16px;background:#444"></div>
<div class="b" style="left:320px;top:972px;width:1px;height:16px;background:#444"></div>
<div class="b" style="left:384px;top:972px;width:1px;height:16px;background:#444"></div>
<div class="b" style="left:428px;top:972px;width:1px;height:16px;background:#444"></div>
<div class="b" style="left:480px;top:972px;width:1px;height:16px;background:#444"></div>
<div class="b" style="left:536px;top:972px;width:1px;height:16px;background:#444"></div>
<div class="b" style="left:571px;top:972px;width:1px;height:16px;background:#444"></div>
<div class="b" style="left:615px;top:972px;width:1px;height:16px;background:#444"></div>
<div class="t" style="left:209.5px;top:975.5px;height:15px;line-height:15px;font-size:10.5px;color:#d03030;font-weight:bold">96</div>
<div class="t" style="left:355.5px;top:975.5px;height:15px;line-height:15px;font-size:10.5px;color:#d03030;font-weight:bold">114</div>
<div class="t" style="left:464.5px;top:975.5px;height:15px;line-height:15px;font-size:10.5px;color:#d03030;font-weight:bold">1</div>
<div class="b" style="left:1910px;top:943px;width:10px;height:52px;background:#3a3f48;border-radius:5px 5px 0 0"></div>
<div class="t" style="left:1725px;top:914px;height:50px;line-height:50px;font-size:39px;color:#fff;letter-spacing:-0.9px;text-shadow:1px 1px 0 #333">@464555l</div>
<svg class="b" style="left:1670px;top:915px" width="60" height="55" viewBox="0 0 60 55"><path d="M11 27a16 16.5 0 0 1 30-12c3 7 3 18-3 24-3 3-6 3-9 3l-4 4-3-4c-7-2-11-8-11-15z" fill="#fff"/><path d="M34 13.3C27 12.5 23.5 16 22 22L18.8 41.5" fill="none" stroke="#111" stroke-width="1.4"/><path d="M16.6 26.2L17.6 24.8H32.6" fill="none" stroke="#111" stroke-width="1.3"/><path d="M41 13.8C43.5 20 43.5 33 35.4 39.8C33 41.2 31 41 29.9 41.5L25.4 45.9" fill="none" stroke="#111" stroke-width="1.3"/></svg>
</body></html>
